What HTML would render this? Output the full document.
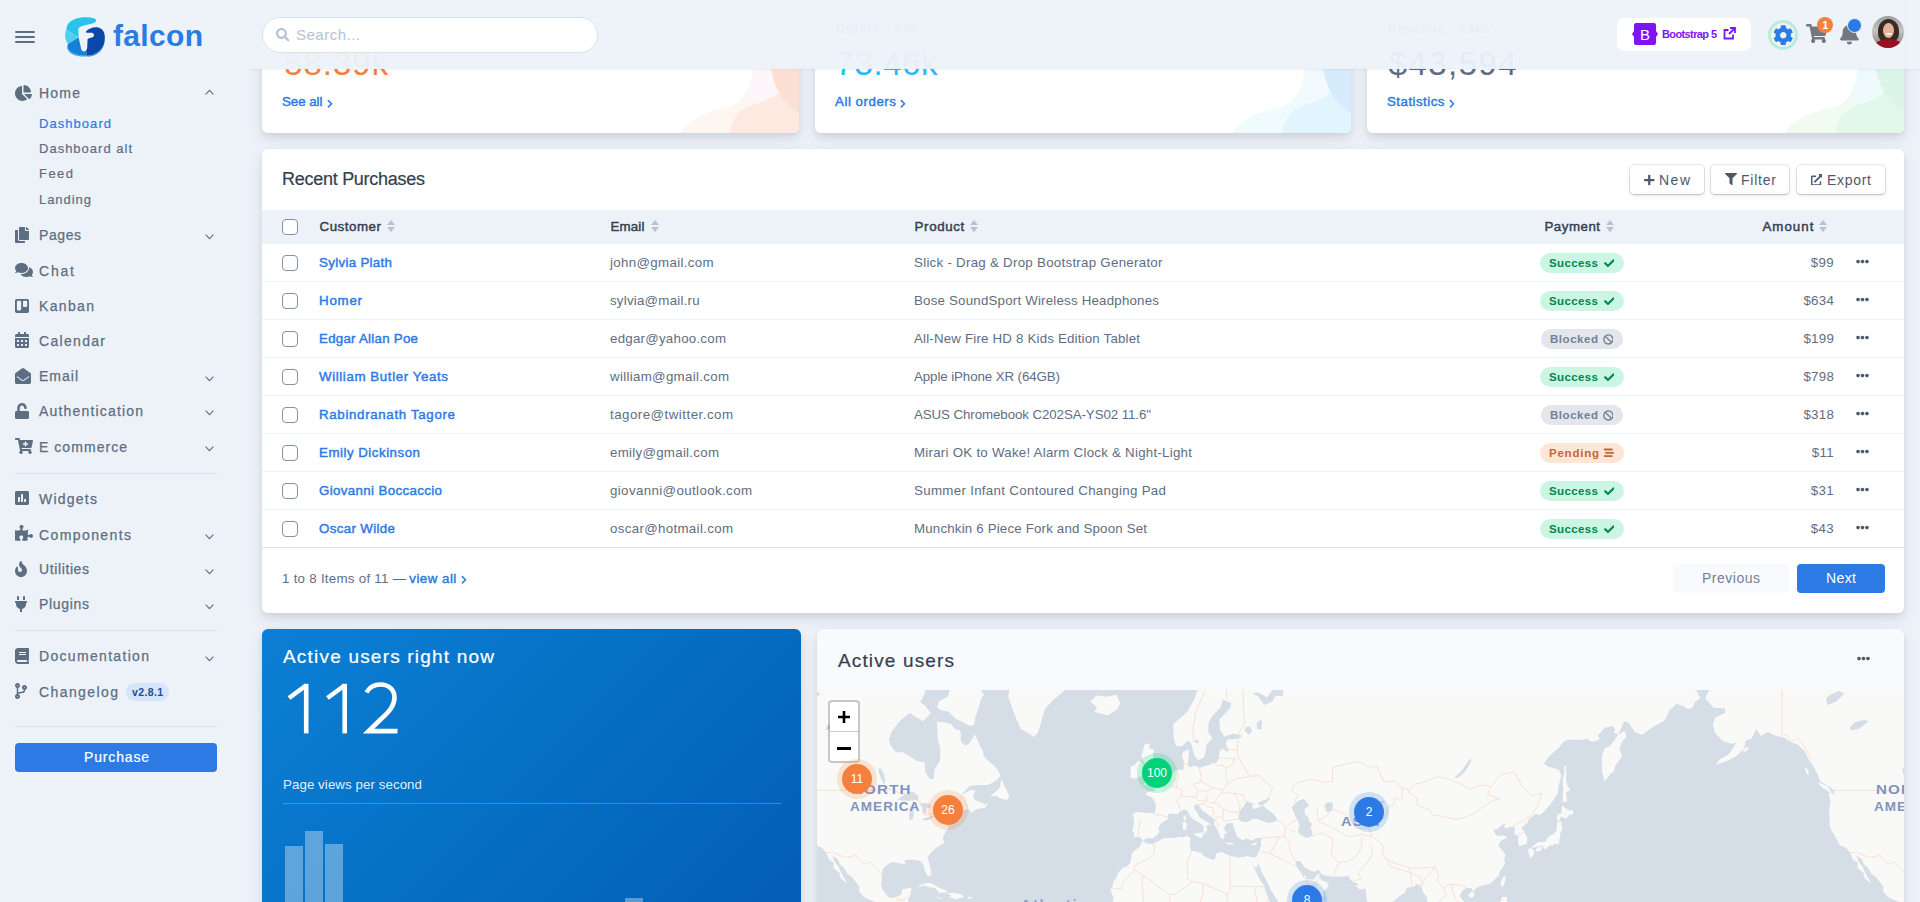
<!DOCTYPE html><html><head><meta charset="utf-8"><title>Falcon</title><style>
*{margin:0;padding:0;box-sizing:border-box}
html,body{width:1920px;height:902px;overflow:hidden;background:#edf2f9;font-family:"Liberation Sans",sans-serif}
.a{position:absolute}
.t{position:absolute;white-space:nowrap;line-height:1}
.card{position:absolute;background:#fff;border-radius:6px;box-shadow:0 7px 14px 0 rgba(65,69,88,.1),0 3px 6px 0 rgba(0,0,0,.07);overflow:hidden}
</style></head><body><div class="card" style="left:262px;top:-20px;width:537px;height:153px"><svg class="a" style="left:407px;top:89px" width="130" height="64" viewBox="0 26 130 64"><path d="M11,90 C20,76 40,68 60,64 C72,61 80,50 84,26 L86,0 L130,0 L130,90Z" fill="#fef6f0"/><path d="M84,26 L86,0 L102,0 L102,26 C105,40 108,50 112,56 C100,60 90,62 76,56 C80,48 83,38 84,26Z" fill="#fdf7fb"/><path d="M61,90 C64,72 74,64 90,60 C105,55 118,45 130,35 L130,90Z" fill="#fde9df"/><path d="M102,0 L102,26 C105,42 112,60 130,70 L130,0Z" fill="#fce0d4"/></svg></div><div class="t" style="left:282.5px;top:23.02px;font-size:12.5px;color:#5e6e82;letter-spacing:0.697px;">Customers</div><div class="t" style="left:364.0px;top:25.14px;font-size:10px;color:#748194;font-weight:700;letter-spacing:0.463px;">-0.23%</div><div class="t" style="left:284.2px;top:47.47px;font-size:33px;color:#f5803e;letter-spacing:0.986px;">58.39k</div><div class="t" style="left:282.0px;top:95.24px;font-size:13.3px;color:#2c7be5;letter-spacing:-0.027px;-webkit-text-stroke:0.45px #2c7be5">See all</div><svg class="a" style="left:326.8px;top:98.7px;" width="5.94" height="9.5" viewBox="0 0 320 512"><path d="M285.476 272.971L91.132 467.314c-9.373 9.373-24.569 9.373-33.941 0l-22.667-22.667c-9.357-9.357-9.375-24.522-.04-33.901L188.505 256 34.484 101.255c-9.335-9.379-9.317-24.544.04-33.901l22.667-22.667c9.373-9.373 24.569-9.373 33.941 0L285.475 239.03c9.373 9.372 9.373 24.568.001 33.941z" fill="#2c7be5"/></svg><div class="card" style="left:815px;top:-20px;width:536px;height:153px"><svg class="a" style="left:406px;top:89px" width="130" height="64" viewBox="0 26 130 64"><path d="M11,90 C20,76 40,68 60,64 C72,61 80,50 84,26 L86,0 L130,0 L130,90Z" fill="#f0fbfe"/><path d="M84,26 L86,0 L102,0 L102,26 C105,40 108,50 112,56 C100,60 90,62 76,56 C80,48 83,38 84,26Z" fill="#f3fafe"/><path d="M61,90 C64,72 74,64 90,60 C105,55 118,45 130,35 L130,90Z" fill="#e0f5fe"/><path d="M102,0 L102,26 C105,42 112,60 130,70 L130,0Z" fill="#d6ebfc"/></svg></div><div class="t" style="left:835.5px;top:23.02px;font-size:12.5px;color:#5e6e82;letter-spacing:1.060px;">Orders</div><div class="t" style="left:894.5px;top:25.14px;font-size:10px;color:#748194;font-weight:700;letter-spacing:0.069px;">0.0%</div><div class="t" style="left:835.5px;top:47.47px;font-size:33px;color:#27bcfd;letter-spacing:0.586px;">73.46k</div><div class="t" style="left:835.0px;top:95.24px;font-size:13.3px;color:#2c7be5;letter-spacing:0.536px;-webkit-text-stroke:0.45px #2c7be5">All orders</div><svg class="a" style="left:900.3px;top:98.7px;" width="5.94" height="9.5" viewBox="0 0 320 512"><path d="M285.476 272.971L91.132 467.314c-9.373 9.373-24.569 9.373-33.941 0l-22.667-22.667c-9.357-9.357-9.375-24.522-.04-33.901L188.505 256 34.484 101.255c-9.335-9.379-9.317-24.544.04-33.901l22.667-22.667c9.373-9.373 24.569-9.373 33.941 0L285.475 239.03c9.373 9.372 9.373 24.568.001 33.941z" fill="#2c7be5"/></svg><div class="card" style="left:1367px;top:-20px;width:537px;height:153px"><svg class="a" style="left:407px;top:89px" width="130" height="64" viewBox="0 26 130 64"><path d="M11,90 C20,76 40,68 60,64 C72,61 80,50 84,26 L86,0 L130,0 L130,90Z" fill="#f2fbf1"/><path d="M84,26 L86,0 L102,0 L102,26 C105,40 108,50 112,56 C100,60 90,62 76,56 C80,48 83,38 84,26Z" fill="#eefafb"/><path d="M61,90 C64,72 74,64 90,60 C105,55 118,45 130,35 L130,90Z" fill="#e2f8eb"/><path d="M102,0 L102,26 C105,42 112,60 130,70 L130,0Z" fill="#dbf6e8"/></svg></div><div class="t" style="left:1387.5px;top:23.02px;font-size:12.5px;color:#5e6e82;letter-spacing:1.094px;">Revenue</div><div class="t" style="left:1459.6px;top:25.14px;font-size:10px;color:#748194;font-weight:700;letter-spacing:0.312px;">9.54%</div><div class="t" style="left:1388.7px;top:47.47px;font-size:33px;color:#5e6e82;letter-spacing:1.454px;">$43,594</div><div class="t" style="left:1387.0px;top:95.24px;font-size:13.3px;color:#2c7be5;letter-spacing:0.476px;-webkit-text-stroke:0.45px #2c7be5">Statistics</div><svg class="a" style="left:1448.8px;top:98.7px;" width="5.94" height="9.5" viewBox="0 0 320 512"><path d="M285.476 272.971L91.132 467.314c-9.373 9.373-24.569 9.373-33.941 0l-22.667-22.667c-9.357-9.357-9.375-24.522-.04-33.901L188.505 256 34.484 101.255c-9.335-9.379-9.317-24.544.04-33.901l22.667-22.667c9.373-9.373 24.569-9.373 33.941 0L285.475 239.03c9.373 9.372 9.373 24.568.001 33.941z" fill="#2c7be5"/></svg><div class="a" style="left:0;top:0;width:1920px;height:69px;background:rgba(237,242,249,.95)"></div><div class="a" style="left:250px;top:69px;width:1670px;height:1px;background:rgba(0,0,0,.04);box-shadow:0 1px 3px rgba(0,0,0,.05)"></div><div class="a" style="left:15px;top:31px;width:20px;height:2px;background:#5e6e82;border-radius:1px"></div><div class="a" style="left:15px;top:36px;width:20px;height:2px;background:#5e6e82;border-radius:1px"></div><div class="a" style="left:15px;top:41px;width:20px;height:2px;background:#5e6e82;border-radius:1px"></div><svg class="a" style="left:65px;top:16.5px;" width="40" height="40" viewBox="0 0 40 40"><path d="M2.1,8.8 C4,4.5 9,1.5 16.2,0.5 C21,0 27,0.6 29.5,1.6 C31.5,2.4 31.8,4.3 29.8,5.5 C27,7 21,7.6 16.5,9.2 C14,10.2 13.2,11.5 13.3,12.5 L13.6,20.5 L1.3,12.5 C1.5,11 1.8,9.8 2.1,8.8Z" fill="#27c3e8"/><path d="M1.3,12.5 L13.6,20.5 L2.9,26.9 C0.8,24 0,21 0.1,18 C0.2,16 0.6,14 1.3,12.5Z" fill="#50d0ef"/><path d="M2.9,26.9 L13.6,20.5 L16.2,32 C16.7,34.5 19.5,35.2 21,33.5 L22,38.8 C18,39 13,38.2 9,36.5 C5,34.8 2,31.5 2.4,29.5 Z" fill="#1680d4"/><path d="M2.4,29.5 C2,31.5 5,34.8 9,36.5 C13,38.2 18,39 22,38.8 L22,39.5 C17,39.8 11,39 7,37 C3.5,35 1.8,32 2.4,29.5Z" fill="#29a6e2"/><path d="M21,14.6 C23,11.8 27,10.4 31,10.3 C35,10.3 38.5,12.5 39.4,16.8 C40.3,21 39.8,25.5 38,29.5 C36,33.5 32,36.5 27,38 C25,38.6 23.5,38.8 22,38.8 L21,33.5 C21.8,32.8 22.1,31.6 22.2,30.5 L22.6,22.1 C24,21.2 25.6,20.8 26.9,20.5 C28.4,20 29.3,18.8 29,17.8 C28.7,16.4 27.5,15.7 26.9,15.7 L22.5,15.8 C21.2,15.8 20.4,15.3 21,14.6Z" fill="#0a47a9"/><path d="M39.6,21 C40.2,28 37,34 31,37.5 C28,39.2 25,39.6 22,39.5 L22,38.8 C26,38.6 31,37 35,33.5 C38,30.5 39.6,26 39.6,21Z" fill="#2a8ae0"/></svg><div class="t" style="left:113.0px;top:20.61px;font-size:30px;color:#2c7be5;font-weight:700;letter-spacing:0.333px;">falcon</div><div class="a" style="left:262px;top:17px;width:336px;height:36px;background:#fff;border:1px solid #d8e2ef;border-radius:18px"></div><svg class="a" style="left:276px;top:28px;" width="13.50" height="13.5" viewBox="0 0 512 512"><path d="M505 442.7L405.3 343c-4.5-4.5-10.6-7-17-7H372c27.6-35.3 44-79.7 44-128C416 93.1 322.9 0 208 0S0 93.1 0 208s93.1 208 208 208c48.3 0 92.7-16.4 128-44v16.3c0 6.4 2.5 12.5 7 17l99.7 99.7c9.4 9.4 24.6 9.4 33.9 0l28.3-28.3c9.4-9.4 9.4-24.6.1-34zM208 336c-70.7 0-128-57.2-128-128 0-70.7 57.2-128 128-128 70.7 0 128 57.2 128 128 0 70.7-57.2 128-128 128z" fill="#b6c1d2"/></svg><div class="t" style="left:296.0px;top:27.10px;font-size:15px;color:#b6c1d2;letter-spacing:0.497px;">Search...</div><div class="a" style="left:1617px;top:18px;width:134px;height:33px;background:#fff;border-radius:7px"></div><svg class="a" style="left:1632px;top:23px;" width="26" height="22" viewBox="0 0 26 22"><path d="M4 0 H22 C23.5 0 24 1 24 2.5 V8 L26 11 L24 14 V19.5 C24 21 23.5 22 22 22 H4 C2.5 22 2 21 2 19.5 V14 L0 11 L2 8 V2.5 C2 1 2.5 0 4 0Z" fill="#7e14f5"/><text x="13" y="17" text-anchor="middle" font-family="Liberation Sans" font-size="15" fill="#fff">B</text></svg><div class="t" style="left:1662.0px;top:29.19px;font-size:11px;color:#7e14f5;font-weight:700;letter-spacing:-0.611px;">Bootstrap 5</div><svg class="a" style="left:1723px;top:27px;" width="13" height="13" viewBox="0 0 13 13"><path d="M10 7.5 V11.5 H1.5 V3 H5.5" stroke="#7e14f5" stroke-width="1.8" fill="none"/><path d="M7 1 H12 V6 M12 1 L6 7" stroke="#7e14f5" stroke-width="1.8" fill="none"/></svg><div class="a" style="left:1768px;top:20px;width:30px;height:30px;border-radius:50%;border:3px solid #b7ecd5"></div><svg class="a" style="left:1773px;top:24.5px;" width="20.50" height="20.5" viewBox="0 0 512 512"><path d="M487.4 315.7l-42.6-24.6c4.3-23.2 4.3-47 0-70.2l42.6-24.6c4.9-2.8 7.1-8.6 5.5-14-11.1-35.6-30-67.8-54.7-94.6-3.8-4.1-10-5.1-14.8-2.3L380.8 110c-17.9-15.4-38.5-27.3-60.8-35.1V25.8c0-5.6-3.9-10.5-9.4-11.7-36.7-8.2-74.3-7.8-109.2 0-5.5 1.2-9.4 6.1-9.4 11.7V75c-22.2 7.9-42.8 19.8-60.8 35.1L88.7 85.5c-4.9-2.8-11-1.9-14.8 2.3-24.7 26.7-43.6 58.9-54.7 94.6-1.7 5.4.6 11.2 5.5 14L67.3 221c-4.3 23.2-4.3 47 0 70.2l-42.6 24.6c-4.9 2.8-7.1 8.6-5.5 14 11.1 35.6 30 67.8 54.7 94.6 3.8 4.1 10 5.1 14.8 2.3l42.6-24.6c17.9 15.4 38.5 27.3 60.8 35.1v49.2c0 5.6 3.9 10.5 9.4 11.7 36.7 8.2 74.3 7.8 109.2 0 5.5-1.2 9.4-6.1 9.4-11.7v-49.2c22.2-7.9 42.8-19.8 60.8-35.1l42.6 24.6c4.9 2.8 11 1.9 14.8-2.3 24.7-26.7 43.6-58.9 54.7-94.6 1.5-5.5-.7-11.3-5.6-14.1zM256 336c-44.1 0-80-35.9-80-80s35.9-80 80-80 80 35.9 80 80-35.9 80-80 80z" fill="#2c7be5"/></svg><svg class="a" style="left:1806px;top:24px;" width="21.38" height="19" viewBox="0 0 576 512"><path d="M528.12 301.319l47.273-208C578.806 78.301 567.391 64 551.99 64H159.208l-9.166-44.81C147.758 8.021 137.93 0 126.529 0H24C10.745 0 0 10.745 0 24v16c0 13.255 10.745 24 24 24h69.883l70.248 343.435C147.325 417.1 136 435.222 136 456c0 30.928 25.072 56 56 56s56-25.072 56-56c0-15.674-6.447-29.835-16.824-40h209.647C430.447 426.165 424 440.326 424 456c0 30.928 25.072 56 56 56s56-25.072 56-56c0-22.172-12.888-41.332-31.579-50.405l5.517-24.276c3.413-15.018-8.002-29.319-23.403-29.319H218.117l-6.545-32h293.145c11.206 0 20.92-7.754 23.403-18.681z" fill="#737880"/></svg><div class="a" style="left:1817px;top:17px;width:16px;height:16px;border-radius:50%;background:#f5803e"></div><div class="t" style="left:1822.3px;top:19.89px;font-size:11px;color:#fff;font-weight:700;">1</div><svg class="a" style="left:1840px;top:23px;" width="18.81" height="21.5" viewBox="0 0 448 512"><path d="M224 512c35.32 0 63.97-28.65 63.970-64H160.03c0 35.35 28.65 64 63.97 64zm215.39-149.71c-19.32-20.76-55.47-51.99-55.47-154.29 0-77.7-54.48-139.9-127.94-155.16V32c0-17.67-14.32-32-31.98-32s-31.98 14.33-31.98 32v20.84C118.56 68.1 64.08 130.3 64.08 208c0 102.3-36.15 133.53-55.47 154.29-6 6.45-8.66 14.16-8.610 21.71.11 16.4 12.98 32 32.1 32h383.8c19.12 0 32-15.6 32.1-32 .05-7.55-2.61-15.27-8.61-21.71z" fill="#737880"/></svg><div class="a" style="left:1846.5px;top:17.5px;width:15px;height:15px;border-radius:50%;background:#2c7be5;border:1.5px solid #edf2f9"></div><div class="a" style="left:1872px;top:16px;width:32px;height:32px;border-radius:50%;overflow:hidden;background:linear-gradient(180deg,#9aa0a6 0%,#c8c3bf 45%,#7d7a78 100%)"><div class="a" style="left:6px;top:3px;width:21px;height:24px;border-radius:50% 50% 40% 40%;background:#3b2a24"></div><div class="a" style="left:11px;top:7px;width:11px;height:15px;border-radius:50%;background:#e2b49c"></div><div class="a" style="left:13.5px;top:16.5px;width:6px;height:2.5px;border-radius:0 0 3px 3px;background:#f7f1ef"></div><div class="a" style="left:3px;top:23px;width:27px;height:14px;border-radius:50% 50% 0 0;background:#9b0f22"></div></div><svg class="a" style="left:15px;top:84.6px;" width="17.00" height="16" viewBox="0 0 544 512"><path d="M527.79 288H290.5l158.03 158.03c6.04 6.04 15.98 6.53 22.19.68 38.7-36.46 65.32-85.61 73.13-140.86 1.34-9.46-6.51-17.85-16.06-17.85zm-15.83-64.8C503.72 103.74 408.26 8.28 288.8.04 279.68-.59 272 7.1 272 16.24V240h223.77c9.14 0 16.82-7.68 16.19-16.8zM224 288V50.71c0-9.55-8.39-17.4-17.84-16.06C86.99 51.49-4.1 155.6.14 280.37 4.5 408.51 114.83 513.59 243.03 511.98c50.4-.63 96.97-16.87 135.26-44.03 7.9-5.6 8.42-17.23 1.57-24.08L224 288z" fill="#5e6e82"/></svg><div class="t" style="left:39.0px;top:85.85px;font-size:14px;color:#5e6e82;letter-spacing:1.219px;-webkit-text-stroke:0.25px #5e6e82">Home</div><svg class="a" style="left:205px;top:89px;" width="9" height="6" viewBox="0 0 9 6"><path d="M0.6 5.4 L4.5 1.4 L8.4 5.4" stroke="#5e6e82" stroke-width="1.1" fill="none"/></svg><svg class="a" style="left:15px;top:227.3px;" width="14.00" height="16" viewBox="0 0 448 512"><path d="M320 448v40c0 13.255-10.745 24-24 24H24c-13.255 0-24-10.745-24-24V120c0-13.255 10.745-24 24-24h72v296c0 30.879 25.121 56 56 56h168zm0-344V0H152c-13.255 0-24 10.745-24 24v368c0 13.255 10.745 24 24 24h272c13.255 0 24-10.745 24-24V128H344c-13.2 0-24-10.8-24-24zm120.971-31.029L375.029 7.029A24 24 0 0 0 358.059 0H352v96h96v-6.059a24 24 0 0 0-7.029-16.97z" fill="#5e6e82"/></svg><div class="t" style="left:39.0px;top:227.85px;font-size:14px;color:#5e6e82;letter-spacing:0.576px;-webkit-text-stroke:0.25px #5e6e82">Pages</div><svg class="a" style="left:205px;top:234.3px;" width="9" height="6" viewBox="0 0 9 6"><path d="M0.6 0.6 L4.5 4.6 L8.4 0.6" stroke="#5e6e82" stroke-width="1.1" fill="none"/></svg><svg class="a" style="left:15px;top:262.3px;" width="18.00" height="16" viewBox="0 0 576 512"><path d="M416 192c0-88.4-93.1-160-208-160S0 103.6 0 192c0 34.3 14.1 65.9 38 92-13.4 30.2-35.5 54.2-35.8 54.5-2.2 2.3-2.8 5.7-1.5 8.7S4.8 352 8 352c36.6 0 66.9-12.3 88.7-25 32.2 15.7 70.3 25 111.3 25 114.9 0 208-71.6 208-160zm122 220c23.9-26 38-57.7 38-92 0-66.9-53.5-124.2-129.3-148.1.9 6.6 1.3 13.3 1.3 20.1 0 105.9-107.7 192-240 192-10.8 0-21.3-.8-31.7-1.9C207.8 439.6 281.8 480 368 480c41 0 79.1-9.2 111.3-25 21.8 12.7 52.1 25 88.7 25 3.2 0 6.1-1.9 7.3-4.8 1.3-2.9.7-6.3-1.5-8.7-.3-.3-22.4-24.2-35.8-54.5z" fill="#5e6e82"/></svg><div class="t" style="left:39.0px;top:263.85px;font-size:14px;color:#5e6e82;letter-spacing:1.810px;-webkit-text-stroke:0.25px #5e6e82">Chat</div><svg class="a" style="left:15px;top:298.3px;" width="14.00" height="16" viewBox="0 0 448 512"><path d="M392.3 32H56.1C25.1 32 0 57.1 0 88c-.1 0 0-4 0 336 0 30.9 25.1 56 56 56h336.2c30.8-.2 55.7-25.2 55.7-56V88c.1-30.8-24.8-55.8-55.6-56zM197 371.3c-.2 14.7-12.1 26.6-26.9 26.6H87.4c-14.8.1-26.9-11.8-27-26.6V117.1c0-14.8 12-26.9 26.9-26.9h82.9c14.8 0 26.9 12 26.9 26.9v254.2zm193.1-112c0 14.8-12 26.9-26.9 26.9h-81c-14.8 0-26.9-12-26.9-26.9V117.2c0-14.8 12-26.9 26.8-26.9h81.1c14.8 0 26.9 12 26.9 26.9v142.1z" fill="#5e6e82"/></svg><div class="t" style="left:39.0px;top:298.95px;font-size:14px;color:#5e6e82;letter-spacing:1.347px;-webkit-text-stroke:0.25px #5e6e82">Kanban</div><svg class="a" style="left:15px;top:331.9px;" width="14.00" height="16" viewBox="0 0 448 512"><path d="M0 464c0 26.5 21.5 48 48 48h352c26.5 0 48-21.5 48-48V192H0v272zm320-196c0-6.6 5.4-12 12-12h40c6.6 0 12 5.4 12 12v40c0 6.6-5.4 12-12 12h-40c-6.6 0-12-5.4-12-12v-40zm0 128c0-6.6 5.4-12 12-12h40c6.6 0 12 5.4 12 12v40c0 6.6-5.4 12-12 12h-40c-6.6 0-12-5.4-12-12v-40zM192 268c0-6.6 5.4-12 12-12h40c6.6 0 12 5.4 12 12v40c0 6.6-5.4 12-12 12h-40c-6.6 0-12-5.4-12-12v-40zm0 128c0-6.6 5.4-12 12-12h40c6.6 0 12 5.4 12 12v40c0 6.6-5.4 12-12 12h-40c-6.6 0-12-5.4-12-12v-40zM64 268c0-6.6 5.4-12 12-12h40c6.6 0 12 5.4 12 12v40c0 6.6-5.4 12-12 12H76c-6.6 0-12-5.4-12-12v-40zm0 128c0-6.6 5.4-12 12-12h40c6.6 0 12 5.4 12 12v40c0 6.6-5.4 12-12 12H76c-6.6 0-12-5.4-12-12v-40zM400 64h-48V16c0-8.8-7.2-16-16-16h-32c-8.8 0-16 7.2-16 16v48H160V16c0-8.8-7.2-16-16-16h-32c-8.8 0-16 7.2-16 16v48H48C21.5 64 0 85.5 0 112v48h448v-48c0-26.5-21.5-48-48-48z" fill="#5e6e82"/></svg><div class="t" style="left:39.0px;top:333.85px;font-size:14px;color:#5e6e82;letter-spacing:1.313px;-webkit-text-stroke:0.25px #5e6e82">Calendar</div><svg class="a" style="left:15px;top:367.9px;" width="16.00" height="16" viewBox="0 0 512 512"><path d="M512 464c0 26.51-21.49 48-48 48H48c-26.51 0-48-21.49-48-48V200.724a48 48 0 0 1 18.387-37.776c24.913-19.529 45.501-35.365 164.2-121.511C199.412 29.17 232.797-.347 256 .003c23.198-.354 56.596 29.172 73.413 41.433 118.687 86.137 139.303 101.995 164.2 121.512A48 48 0 0 1 512 200.724V464zm-65.666-196.605c-2.563-3.728-7.7-4.595-11.339-1.907-22.845 16.873-55.462 40.705-105.582 77.079-16.825 12.266-50.21 41.781-73.413 41.43-23.211.344-56.559-29.143-73.413-41.43-50.114-36.37-82.734-60.204-105.582-77.079-3.639-2.688-8.776-1.821-11.339 1.907l-9.072 13.196a7.998 7.998 0 0 0 1.839 10.967c22.887 16.899 55.454 40.69 105.303 76.868 20.274 14.781 56.524 47.813 92.264 47.573 35.724.242 71.961-32.771 92.263-47.573 49.85-36.179 82.418-59.97 105.303-76.868a7.998 7.998 0 0 0 1.839-10.967l-9.071-13.196z" fill="#5e6e82"/></svg><div class="t" style="left:39.0px;top:369.05px;font-size:14px;color:#5e6e82;letter-spacing:0.998px;-webkit-text-stroke:0.25px #5e6e82">Email</div><svg class="a" style="left:205px;top:375.5px;" width="9" height="6" viewBox="0 0 9 6"><path d="M0.6 0.6 L4.5 4.6 L8.4 0.6" stroke="#5e6e82" stroke-width="1.1" fill="none"/></svg><svg class="a" style="left:15px;top:403px;" width="14.00" height="16" viewBox="0 0 448 512"><path d="M400 256H152V152.9c0-39.6 31.7-72.5 71.3-72.9 40-.4 72.7 32.1 72.7 72v16c0 13.3 10.7 24 24 24h32c13.3 0 24-10.7 24-24v-16C376 68 307.5-.3 223.5 0 139.5.3 72 69.5 72 153.5V256H48c-26.5 0-48 21.5-48 48v160c0 26.5 21.5 48 48 48h352c26.5 0 48-21.5 48-48V304c0-26.5-21.5-48-48-48z" fill="#5e6e82"/></svg><div class="t" style="left:39.0px;top:403.55px;font-size:14px;color:#5e6e82;letter-spacing:1.175px;-webkit-text-stroke:0.25px #5e6e82">Authentication</div><svg class="a" style="left:205px;top:410px;" width="9" height="6" viewBox="0 0 9 6"><path d="M0.6 0.6 L4.5 4.6 L8.4 0.6" stroke="#5e6e82" stroke-width="1.1" fill="none"/></svg><svg class="a" style="left:15px;top:437.7px;" width="18.00" height="16" viewBox="0 0 576 512"><path d="M504.717 320H211.572l6.545 32h268.418c15.401 0 26.816 14.301 23.403 29.319l-5.517 24.276C523.112 414.668 536 433.828 536 456c0 31.202-25.519 56.444-56.824 55.994-29.823-.429-54.35-24.631-55.155-54.447-.44-16.287 6.085-31.049 16.803-41.548H231.176C241.553 426.165 248 440.326 248 456c0 31.813-26.528 57.431-58.67 55.938-28.54-1.325-51.751-24.385-53.251-52.917-1.158-22.034 10.436-41.455 28.051-51.586L93.883 64H24C10.745 64 0 53.255 0 40V24C0 10.745 10.745 0 24 0h102.529c11.401 0 21.228 8.021 23.513 19.19L159.208 64H551.99c15.401 0 26.816 14.301 23.403 29.319l-47.273 208C525.637 312.246 515.923 320 504.717 320zM408 168h-48v-40c0-8.837-7.163-16-16-16h-16c-8.837 0-16 7.163-16 16v40h-48c-8.837 0-16 7.163-16 16v16c0 8.837 7.163 16 16 16h48v40c0 8.837 7.163 16 16 16h16c8.837 0 16-7.163 16-16v-40h48c8.837 0 16-7.163 16-16v-16c0-8.837-7.163-16-16-16z" fill="#5e6e82"/></svg><div class="t" style="left:39.0px;top:439.55px;font-size:14px;color:#5e6e82;letter-spacing:1.048px;-webkit-text-stroke:0.25px #5e6e82">E commerce</div><svg class="a" style="left:205px;top:446px;" width="9" height="6" viewBox="0 0 9 6"><path d="M0.6 0.6 L4.5 4.6 L8.4 0.6" stroke="#5e6e82" stroke-width="1.1" fill="none"/></svg><svg class="a" style="left:15px;top:489.6px;" width="14.00" height="16" viewBox="0 0 448 512"><path d="M400 32H48C21.5 32 0 53.5 0 80v352c0 26.5 21.5 48 48 48h352c26.5 0 48-21.5 48-48V80c0-26.5-21.5-48-48-48zM160 368c0 8.84-7.16 16-16 16h-32c-8.84 0-16-7.16-16-16V240c0-8.84 7.160-16 16-16h32c8.84 0 16 7.16 16 16v128zm96 0c0 8.84-7.16 16-16 16h-32c-8.84 0-16-7.16-16-16V144c0-8.84 7.16-16 16-16h32c8.84 0 16 7.16 16 16v224zm96 0c0 8.84-7.16 16-16 16h-32c-8.84 0-16-7.16-16-16v-64c0-8.84 7.16-16 16-16h32c8.84 0 16 7.16 16 16v64z" fill="#5e6e82"/></svg><div class="t" style="left:39.0px;top:491.95px;font-size:14px;color:#5e6e82;letter-spacing:1.238px;-webkit-text-stroke:0.25px #5e6e82">Widgets</div><svg class="a" style="left:15px;top:525px;" width="18.00" height="16" viewBox="0 0 576 512"><path d="M519.442 288.651c-41.519 0-59.5 31.593-82.058 31.593C377.409 320.244 432 144 432 144s-196.288 80-196.288-3.297c0-35.827 36.288-46.25 36.288-85.985C272 19.216 243.885 0 210.539 0c-34.654 0-66.366 18.891-66.366 56.346 0 41.364 31.711 59.277 31.711 81.75C175.885 207.719 0 166.758 0 166.758v333.237s178.635 41.047 178.635-28.662c0-22.473-40-40.107-40-81.471 0-37.456 29.25-56.346 63.577-56.346 33.673 0 61.788 19.216 61.788 54.717 0 39.735-36.288 50.158-36.288 85.985 0 60.803 129.675 25.73 181.23 25.73 0 0-34.725-120.101 25.827-120.101 35.962 0 46.423 36.152 86.308 36.152C556.712 416 576 387.99 576 354.443c0-34.199-18.962-65.792-56.558-65.792z" fill="#5e6e82"/></svg><div class="t" style="left:39.0px;top:527.55px;font-size:14px;color:#5e6e82;letter-spacing:1.403px;-webkit-text-stroke:0.25px #5e6e82">Components</div><svg class="a" style="left:205px;top:534px;" width="9" height="6" viewBox="0 0 9 6"><path d="M0.6 0.6 L4.5 4.6 L8.4 0.6" stroke="#5e6e82" stroke-width="1.1" fill="none"/></svg><svg class="a" style="left:15px;top:561.2px;" width="12.00" height="16" viewBox="0 0 384 512"><path d="M216 23.86c0-23.8-30.65-32.77-44.15-13.04C48 191.85 224 200 224 288c0 35.63-29.11 64.46-64.85 63.99-35.17-.45-63.15-29.77-63.15-64.94v-85.51c0-21.7-26.47-32.23-41.43-16.5C27.8 213.16 0 261.33 0 320c0 105.87 86.13 192 192 192s192-86.13 192-192c0-170.29-168-193-168-296.14z" fill="#5e6e82"/></svg><div class="t" style="left:39.0px;top:562.25px;font-size:14px;color:#5e6e82;letter-spacing:0.610px;-webkit-text-stroke:0.25px #5e6e82">Utilities</div><svg class="a" style="left:205px;top:568.7px;" width="9" height="6" viewBox="0 0 9 6"><path d="M0.6 0.6 L4.5 4.6 L8.4 0.6" stroke="#5e6e82" stroke-width="1.1" fill="none"/></svg><svg class="a" style="left:15px;top:596px;" width="12.00" height="16" viewBox="0 0 384 512"><path d="M320,32a32,32,0,0,0-64,0v96h64Zm48,128H16A16,16,0,0,0,0,176v32a16,16,0,0,0,16,16H32v32A160.07,160.07,0,0,0,160,412.8V512h64V412.8A160.07,160.07,0,0,0,352,256V224h16a16,16,0,0,0,16-16V176A16,16,0,0,0,368,160ZM128,32a32,32,0,0,0-64,0v96h64Z" fill="#5e6e82"/></svg><div class="t" style="left:39.0px;top:597.05px;font-size:14px;color:#5e6e82;letter-spacing:0.681px;-webkit-text-stroke:0.25px #5e6e82">Plugins</div><svg class="a" style="left:205px;top:603.5px;" width="9" height="6" viewBox="0 0 9 6"><path d="M0.6 0.6 L4.5 4.6 L8.4 0.6" stroke="#5e6e82" stroke-width="1.1" fill="none"/></svg><svg class="a" style="left:15px;top:647.5px;" width="14.00" height="16" viewBox="0 0 448 512"><path d="M448 360V24c0-13.3-10.7-24-24-24H96C43 0 0 43 0 96v320c0 53 43 96 96 96h328c13.3 0 24-10.7 24-24v-16c0-7.5-3.5-14.3-8.9-18.7-4.2-15.4-4.2-59.3 0-74.7 5.4-4.3 8.9-11.1 8.9-18.6zM128 134c0-3.3 2.7-6 6-6h212c3.3 0 6 2.7 6 6v20c0 3.3-2.7 6-6 6H134c-3.3 0-6-2.7-6-6v-20zm0 64c0-3.3 2.7-6 6-6h212c3.3 0 6 2.7 6 6v20c0 3.3-2.7 6-6 6H134c-3.3 0-6-2.7-6-6v-20zm253.4 250H96c-17.7 0-32-14.3-32-32 0-17.6 14.4-32 32-32h285.4c-1.9 17.1-1.9 46.9 0 64z" fill="#5e6e82"/></svg><div class="t" style="left:39.0px;top:649.25px;font-size:14px;color:#5e6e82;letter-spacing:1.320px;-webkit-text-stroke:0.25px #5e6e82">Documentation</div><svg class="a" style="left:205px;top:655.7px;" width="9" height="6" viewBox="0 0 9 6"><path d="M0.6 0.6 L4.5 4.6 L8.4 0.6" stroke="#5e6e82" stroke-width="1.1" fill="none"/></svg><svg class="a" style="left:15px;top:683px;" width="12.00" height="16" viewBox="0 0 384 512"><path d="M384 144c0-44.2-35.8-80-80-80s-80 35.8-80 80c0 36.4 24.3 67.1 57.5 76.8-.6 16.1-4.2 28.5-11 36.9-15.4 19.2-49.3 22.4-85.2 25.7-28.2 2.6-57.4 5.4-81.3 16.9v-144c32.5-10.2 56-40.5 56-76.3 0-44.2-35.8-80-80-80S0 35.8 0 80c0 35.8 23.5 66.1 56 76.3v199.3C23.5 365.9 0 396.2 0 432c0 44.2 35.8 80 80 80s80-35.8 80-80c0-34-21.2-63.1-51.2-74.6 3.1-5.2 7.8-9.8 14.9-13.4 16.2-8.2 40.4-10.4 66.1-12.8 42.2-3.9 90-8.4 118.2-43.4 14-17.4 21.1-39.8 21.6-67.9 31.6-10.8 54.4-40.7 54.4-75.9zM80 64c8.8 0 16 7.2 16 16s-7.2 16-16 16-16-7.2-16-16 7.2-16 16-16zm0 384c-8.8 0-16-7.2-16-16s7.2-16 16-16 16 7.2 16 16-7.2 16-16 16zm224-320c8.8 0 16 7.2 16 16s-7.2 16-16 16-16-7.2-16-16 7.2-16 16-16z" fill="#5e6e82"/></svg><div class="t" style="left:39.0px;top:685.05px;font-size:14px;color:#5e6e82;letter-spacing:1.410px;-webkit-text-stroke:0.25px #5e6e82">Changelog</div><div class="t" style="left:39.0px;top:117.00px;font-size:13px;color:#2c7be5;letter-spacing:1.051px;-webkit-text-stroke:0.2px #2c7be5">Dashboard</div><div class="t" style="left:39.0px;top:142.40px;font-size:13px;color:#5e6e82;letter-spacing:1.006px;-webkit-text-stroke:0.2px #5e6e82">Dashboard alt</div><div class="t" style="left:39.0px;top:167.30px;font-size:13px;color:#5e6e82;letter-spacing:1.457px;-webkit-text-stroke:0.2px #5e6e82">Feed</div><div class="t" style="left:39.0px;top:192.90px;font-size:13px;color:#5e6e82;letter-spacing:0.956px;-webkit-text-stroke:0.2px #5e6e82">Landing</div><div class="a" style="left:15px;top:473px;width:202px;height:1px;background:#d5dfed"></div><div class="a" style="left:15px;top:630px;width:202px;height:1px;background:#d5dfed"></div><div class="a" style="left:15px;top:726px;width:202px;height:1px;background:#d5dfed"></div><div class="a" style="left:126px;top:683px;width:43px;height:18px;background:#d5e5fa;border-radius:9px"></div><div class="t" style="left:132.0px;top:686.61px;font-size:10.5px;color:#1c4f93;font-weight:700;letter-spacing:0.362px;">v2.8.1</div><div class="a" style="left:15px;top:743px;width:202px;height:29px;background:#2c7be5;border-radius:4px"></div><div class="t" style="left:84.0px;top:750.15px;font-size:14px;color:#fff;letter-spacing:0.837px;-webkit-text-stroke:0.2px #fff">Purchase</div><div class="card" style="left:262px;top:149px;width:1642px;height:464px"></div><div class="t" style="left:282.0px;top:170.26px;font-size:18px;color:#344050;letter-spacing:-0.271px;-webkit-text-stroke:0.2px #344050">Recent Purchases</div><div class="a" style="left:1630px;top:165px;width:74px;height:29px;background:#fff;border-radius:4px;box-shadow:0 0 0 1px rgba(43,45,80,.1),0 2px 5px 0 rgba(43,45,80,.08),0 1px 1.5px 0 rgba(0,0,0,.07),0 1px 2px 0 rgba(0,0,0,.08)"></div><div class="a" style="left:1711px;top:165px;width:78px;height:29px;background:#fff;border-radius:4px;box-shadow:0 0 0 1px rgba(43,45,80,.1),0 2px 5px 0 rgba(43,45,80,.08),0 1px 1.5px 0 rgba(0,0,0,.07),0 1px 2px 0 rgba(0,0,0,.08)"></div><div class="a" style="left:1797px;top:165px;width:88px;height:29px;background:#fff;border-radius:4px;box-shadow:0 0 0 1px rgba(43,45,80,.1),0 2px 5px 0 rgba(43,45,80,.08),0 1px 1.5px 0 rgba(0,0,0,.07),0 1px 2px 0 rgba(0,0,0,.08)"></div><svg class="a" style="left:1644.1px;top:173.6px;" width="10.50" height="12" viewBox="0 0 448 512"><path d="M416 208H272V64c0-17.67-14.33-32-32-32h-32c-17.67 0-32 14.33-32 32v144H32c-17.67 0-32 14.33-32 32v32c0 17.67 14.33 32 32 32h144v144c0 17.67 14.33 32 32 32h32c17.67 0 32-14.33 32-32V304h144c17.67 0 32-14.33 32-32v-32c0-17.67-14.33-32-32-32z" fill="#4d5969"/></svg><div class="t" style="left:1659.0px;top:172.65px;font-size:14px;color:#4d5969;letter-spacing:1.497px;">New</div><svg class="a" style="left:1725.2px;top:173.3px;" width="12.00" height="12" viewBox="0 0 512 512"><path d="M487.976 0H24.028C2.71 0-8.047 25.866 7.058 40.971L192 225.941V432c0 7.831 3.821 15.17 10.237 19.662l80 55.98C298.02 518.69 320 507.493 320 487.98V225.941l184.947-184.97C520.021 25.896 509.338 0 487.976 0z" fill="#4d5969"/></svg><div class="t" style="left:1741.0px;top:172.65px;font-size:14px;color:#4d5969;letter-spacing:0.778px;">Filter</div><svg class="a" style="left:1810.6px;top:173.8px;" width="11.70" height="11.7" viewBox="0 0 512 512"><path d="M432,320H400a16,16,0,0,0-16,16V448H64V128H208a16,16,0,0,0,16-16V80a16,16,0,0,0-16-16H48A48,48,0,0,0,0,112V464a48,48,0,0,0,48,48H400a48,48,0,0,0,48-48V336A16,16,0,0,0,432,320ZM488,0h-128c-21.37,0-32.05,25.91-17,41l35.73,35.73L135,320.37a24,24,0,0,0,0,34L157.67,377a24,24,0,0,0,34,0L435.28,133.32,471,169c15,15,41,4.5,41-17V24A24,24,0,0,0,488,0Z" fill="#4d5969"/></svg><div class="t" style="left:1827.0px;top:172.65px;font-size:14px;color:#4d5969;letter-spacing:0.708px;">Export</div><div class="a" style="left:262px;top:210px;width:1642px;height:34px;background:#edf2f9"></div><div class="a" style="left:282px;top:219px;width:16px;height:16px;background:#fff;border:1px solid #8392a8;border-radius:4px"></div><div class="t" style="left:319.5px;top:219.74px;font-size:13.3px;color:#344050;letter-spacing:0.551px;-webkit-text-stroke:0.45px #344050">Customer</div><svg class="a" style="left:387px;top:220px;" width="8" height="12" viewBox="0 0 8 12"><path d="M4 0 L8 5 H0Z M0 7 H8 L4 12Z" fill="#b6c1d2"/></svg><div class="t" style="left:610.4px;top:219.74px;font-size:13.3px;color:#344050;letter-spacing:0.186px;-webkit-text-stroke:0.45px #344050">Email</div><svg class="a" style="left:651px;top:220px;" width="8" height="12" viewBox="0 0 8 12"><path d="M4 0 L8 5 H0Z M0 7 H8 L4 12Z" fill="#b6c1d2"/></svg><div class="t" style="left:914.6px;top:219.74px;font-size:13.3px;color:#344050;letter-spacing:0.628px;-webkit-text-stroke:0.45px #344050">Product</div><svg class="a" style="left:970px;top:220px;" width="8" height="12" viewBox="0 0 8 12"><path d="M4 0 L8 5 H0Z M0 7 H8 L4 12Z" fill="#b6c1d2"/></svg><div class="t" style="left:1544.5px;top:219.74px;font-size:13.3px;color:#344050;letter-spacing:0.503px;-webkit-text-stroke:0.45px #344050">Payment</div><svg class="a" style="left:1606px;top:220px;" width="8" height="12" viewBox="0 0 8 12"><path d="M4 0 L8 5 H0Z M0 7 H8 L4 12Z" fill="#b6c1d2"/></svg><div class="t" style="left:1762.4px;top:219.74px;font-size:13.3px;color:#344050;letter-spacing:1.033px;-webkit-text-stroke:0.45px #344050">Amount</div><svg class="a" style="left:1819px;top:220px;" width="8" height="12" viewBox="0 0 8 12"><path d="M4 0 L8 5 H0Z M0 7 H8 L4 12Z" fill="#b6c1d2"/></svg><div class="a" style="left:262px;top:281px;width:1642px;height:1px;background:#edf2f9"></div><div class="a" style="left:282px;top:254.5px;width:16px;height:16px;background:#fff;border:1px solid #8392a8;border-radius:4px"></div><div class="t" style="left:319.0px;top:256.04px;font-size:13.3px;color:#2c7be5;letter-spacing:0.319px;-webkit-text-stroke:0.45px #2c7be5">Sylvia Plath</div><div class="t" style="left:610.0px;top:256.04px;font-size:13.3px;color:#5e6e82;letter-spacing:0.335px;">john@gmail.com</div><div class="t" style="left:914.0px;top:256.04px;font-size:13.3px;color:#5e6e82;letter-spacing:0.276px;">Slick - Drag &amp; Drop Bootstrap Generator</div><div class="t" style="left:1810.8px;top:256.04px;font-size:13.3px;color:#5e6e82;letter-spacing:0.3px">$99</div><svg class="a" style="left:1856px;top:254.8px;" width="13.00" height="13" viewBox="0 0 512 512"><path d="M328 256c0 39.8-32.2 72-72 72s-72-32.2-72-72 32.2-72 72-72 72 32.2 72 72zm104-72c-39.8 0-72 32.2-72 72s32.2 72 72 72 72-32.2 72-72-32.2-72-72-72zm-352 0c-39.8 0-72 32.2-72 72s32.2 72 72 72 72-32.2 72-72-32.2-72-72-72z" fill="#4d5969"/></svg><div class="a" style="left:1540px;top:253px;width:84px;height:20px;background:#ccf6e4;border-radius:10px"></div><div class="t" style="left:1549.0px;top:257.57px;font-size:11.5px;color:#00864e;font-weight:700;letter-spacing:0.388px;">Success</div><svg class="a" style="left:1603.8px;top:257.5px;" width="10.60" height="10.6" viewBox="0 0 512 512"><path d="M173.898 439.404l-166.4-166.4c-9.997-9.997-9.997-26.206 0-36.204l36.203-36.204c9.997-9.998 26.207-9.998 36.204 0L192 312.69 432.095 72.596c9.997-9.997 26.207-9.997 36.204 0l36.203 36.204c9.997 9.997 9.997 26.206 0 36.204l-294.4 294.401c-9.998 9.997-26.207 9.997-36.204-.001z" fill="#00864e"/></svg><div class="a" style="left:262px;top:319px;width:1642px;height:1px;background:#edf2f9"></div><div class="a" style="left:282px;top:292.5px;width:16px;height:16px;background:#fff;border:1px solid #8392a8;border-radius:4px"></div><div class="t" style="left:319.0px;top:294.04px;font-size:13.3px;color:#2c7be5;letter-spacing:0.774px;-webkit-text-stroke:0.45px #2c7be5">Homer</div><div class="t" style="left:610.0px;top:294.04px;font-size:13.3px;color:#5e6e82;letter-spacing:0.226px;">sylvia@mail.ru</div><div class="t" style="left:914.0px;top:294.04px;font-size:13.3px;color:#5e6e82;letter-spacing:0.204px;">Bose SoundSport Wireless Headphones</div><div class="t" style="left:1803.4px;top:294.04px;font-size:13.3px;color:#5e6e82;letter-spacing:0.3px">$634</div><svg class="a" style="left:1856px;top:292.8px;" width="13.00" height="13" viewBox="0 0 512 512"><path d="M328 256c0 39.8-32.2 72-72 72s-72-32.2-72-72 32.2-72 72-72 72 32.2 72 72zm104-72c-39.8 0-72 32.2-72 72s32.2 72 72 72 72-32.2 72-72-32.2-72-72-72zm-352 0c-39.8 0-72 32.2-72 72s32.2 72 72 72 72-32.2 72-72-32.2-72-72-72z" fill="#4d5969"/></svg><div class="a" style="left:1540px;top:291px;width:84px;height:20px;background:#ccf6e4;border-radius:10px"></div><div class="t" style="left:1549.0px;top:295.57px;font-size:11.5px;color:#00864e;font-weight:700;letter-spacing:0.388px;">Success</div><svg class="a" style="left:1603.8px;top:295.5px;" width="10.60" height="10.6" viewBox="0 0 512 512"><path d="M173.898 439.404l-166.4-166.4c-9.997-9.997-9.997-26.206 0-36.204l36.203-36.204c9.997-9.998 26.207-9.998 36.204 0L192 312.69 432.095 72.596c9.997-9.997 26.207-9.997 36.204 0l36.203 36.204c9.997 9.997 9.997 26.206 0 36.204l-294.4 294.401c-9.998 9.997-26.207 9.997-36.204-.001z" fill="#00864e"/></svg><div class="a" style="left:262px;top:357px;width:1642px;height:1px;background:#edf2f9"></div><div class="a" style="left:282px;top:330.5px;width:16px;height:16px;background:#fff;border:1px solid #8392a8;border-radius:4px"></div><div class="t" style="left:319.0px;top:332.04px;font-size:13.3px;color:#2c7be5;letter-spacing:0.258px;-webkit-text-stroke:0.45px #2c7be5">Edgar Allan Poe</div><div class="t" style="left:610.0px;top:332.04px;font-size:13.3px;color:#5e6e82;letter-spacing:0.245px;">edgar@yahoo.com</div><div class="t" style="left:914.0px;top:332.04px;font-size:13.3px;color:#5e6e82;letter-spacing:0.187px;">All-New Fire HD 8 Kids Edition Tablet</div><div class="t" style="left:1803.4px;top:332.04px;font-size:13.3px;color:#5e6e82;letter-spacing:0.3px">$199</div><svg class="a" style="left:1856px;top:330.8px;" width="13.00" height="13" viewBox="0 0 512 512"><path d="M328 256c0 39.8-32.2 72-72 72s-72-32.2-72-72 32.2-72 72-72 72 32.2 72 72zm104-72c-39.8 0-72 32.2-72 72s32.2 72 72 72 72-32.2 72-72-32.2-72-72-72zm-352 0c-39.8 0-72 32.2-72 72s32.2 72 72 72 72-32.2 72-72-32.2-72-72-72z" fill="#4d5969"/></svg><div class="a" style="left:1541px;top:329px;width:82px;height:20px;background:#e3e6ed;border-radius:10px"></div><div class="t" style="left:1550.0px;top:333.57px;font-size:11.5px;color:#748194;font-weight:700;letter-spacing:0.544px;">Blocked</div><svg class="a" style="left:1602.6px;top:333.8px;" width="10.80" height="10.8" viewBox="0 0 512 512"><path d="M256 8C119.034 8 8 119.033 8 256s111.034 248 248 248 248-111.034 248-248S392.967 8 256 8zm130.108 117.892c65.448 65.448 70 165.481 20.677 235.637L150.47 105.216c70.204-49.356 170.226-44.735 235.638 20.676zM125.892 386.108c-65.448-65.448-70-165.481-20.677-235.637L361.53 406.784c-70.203 49.356-170.226 44.736-235.638-20.676z" fill="#748194"/></svg><div class="a" style="left:262px;top:395px;width:1642px;height:1px;background:#edf2f9"></div><div class="a" style="left:282px;top:368.5px;width:16px;height:16px;background:#fff;border:1px solid #8392a8;border-radius:4px"></div><div class="t" style="left:319.0px;top:370.04px;font-size:13.3px;color:#2c7be5;letter-spacing:0.604px;-webkit-text-stroke:0.45px #2c7be5">William Butler Yeats</div><div class="t" style="left:610.0px;top:370.04px;font-size:13.3px;color:#5e6e82;letter-spacing:0.312px;">william@gmail.com</div><div class="t" style="left:914.0px;top:370.04px;font-size:13.3px;color:#5e6e82;letter-spacing:-0.088px;">Apple iPhone XR (64GB)</div><div class="t" style="left:1803.4px;top:370.04px;font-size:13.3px;color:#5e6e82;letter-spacing:0.3px">$798</div><svg class="a" style="left:1856px;top:368.8px;" width="13.00" height="13" viewBox="0 0 512 512"><path d="M328 256c0 39.8-32.2 72-72 72s-72-32.2-72-72 32.2-72 72-72 72 32.2 72 72zm104-72c-39.8 0-72 32.2-72 72s32.2 72 72 72 72-32.2 72-72-32.2-72-72-72zm-352 0c-39.8 0-72 32.2-72 72s32.2 72 72 72 72-32.2 72-72-32.2-72-72-72z" fill="#4d5969"/></svg><div class="a" style="left:1540px;top:367px;width:84px;height:20px;background:#ccf6e4;border-radius:10px"></div><div class="t" style="left:1549.0px;top:371.57px;font-size:11.5px;color:#00864e;font-weight:700;letter-spacing:0.388px;">Success</div><svg class="a" style="left:1603.8px;top:371.5px;" width="10.60" height="10.6" viewBox="0 0 512 512"><path d="M173.898 439.404l-166.4-166.4c-9.997-9.997-9.997-26.206 0-36.204l36.203-36.204c9.997-9.998 26.207-9.998 36.204 0L192 312.69 432.095 72.596c9.997-9.997 26.207-9.997 36.204 0l36.203 36.204c9.997 9.997 9.997 26.206 0 36.204l-294.4 294.401c-9.998 9.997-26.207 9.997-36.204-.001z" fill="#00864e"/></svg><div class="a" style="left:262px;top:433px;width:1642px;height:1px;background:#edf2f9"></div><div class="a" style="left:282px;top:406.5px;width:16px;height:16px;background:#fff;border:1px solid #8392a8;border-radius:4px"></div><div class="t" style="left:319.0px;top:408.04px;font-size:13.3px;color:#2c7be5;letter-spacing:0.668px;-webkit-text-stroke:0.45px #2c7be5">Rabindranath Tagore</div><div class="t" style="left:610.0px;top:408.04px;font-size:13.3px;color:#5e6e82;letter-spacing:0.484px;">tagore@twitter.com</div><div class="t" style="left:914.0px;top:408.04px;font-size:13.3px;color:#5e6e82;letter-spacing:-0.080px;">ASUS Chromebook C202SA-YS02 11.6&quot;</div><div class="t" style="left:1803.4px;top:408.04px;font-size:13.3px;color:#5e6e82;letter-spacing:0.3px">$318</div><svg class="a" style="left:1856px;top:406.8px;" width="13.00" height="13" viewBox="0 0 512 512"><path d="M328 256c0 39.8-32.2 72-72 72s-72-32.2-72-72 32.2-72 72-72 72 32.2 72 72zm104-72c-39.8 0-72 32.2-72 72s32.2 72 72 72 72-32.2 72-72-32.2-72-72-72zm-352 0c-39.8 0-72 32.2-72 72s32.2 72 72 72 72-32.2 72-72-32.2-72-72-72z" fill="#4d5969"/></svg><div class="a" style="left:1541px;top:405px;width:82px;height:20px;background:#e3e6ed;border-radius:10px"></div><div class="t" style="left:1550.0px;top:409.57px;font-size:11.5px;color:#748194;font-weight:700;letter-spacing:0.544px;">Blocked</div><svg class="a" style="left:1602.6px;top:409.8px;" width="10.80" height="10.8" viewBox="0 0 512 512"><path d="M256 8C119.034 8 8 119.033 8 256s111.034 248 248 248 248-111.034 248-248S392.967 8 256 8zm130.108 117.892c65.448 65.448 70 165.481 20.677 235.637L150.47 105.216c70.204-49.356 170.226-44.735 235.638 20.676zM125.892 386.108c-65.448-65.448-70-165.481-20.677-235.637L361.53 406.784c-70.203 49.356-170.226 44.736-235.638-20.676z" fill="#748194"/></svg><div class="a" style="left:262px;top:471px;width:1642px;height:1px;background:#edf2f9"></div><div class="a" style="left:282px;top:444.5px;width:16px;height:16px;background:#fff;border:1px solid #8392a8;border-radius:4px"></div><div class="t" style="left:319.0px;top:446.04px;font-size:13.3px;color:#2c7be5;letter-spacing:0.510px;-webkit-text-stroke:0.45px #2c7be5">Emily Dickinson</div><div class="t" style="left:610.0px;top:446.04px;font-size:13.3px;color:#5e6e82;letter-spacing:0.276px;">emily@gmail.com</div><div class="t" style="left:914.0px;top:446.04px;font-size:13.3px;color:#5e6e82;letter-spacing:0.255px;">Mirari OK to Wake! Alarm Clock &amp; Night-Light</div><div class="t" style="left:1811.8px;top:446.04px;font-size:13.3px;color:#5e6e82;letter-spacing:0.3px">$11</div><svg class="a" style="left:1856px;top:444.8px;" width="13.00" height="13" viewBox="0 0 512 512"><path d="M328 256c0 39.8-32.2 72-72 72s-72-32.2-72-72 32.2-72 72-72 72 32.2 72 72zm104-72c-39.8 0-72 32.2-72 72s32.2 72 72 72 72-32.2 72-72-32.2-72-72-72zm-352 0c-39.8 0-72 32.2-72 72s32.2 72 72 72 72-32.2 72-72-32.2-72-72-72z" fill="#4d5969"/></svg><div class="a" style="left:1540px;top:443px;width:84px;height:20px;background:#fde6d8;border-radius:10px"></div><div class="t" style="left:1549.0px;top:447.57px;font-size:11.5px;color:#c46632;font-weight:700;letter-spacing:0.774px;">Pending</div><svg class="a" style="left:1604px;top:447.5px;" width="9.80" height="9.8" viewBox="0 0 512 512"><path d="M16 128h416c8.84 0 16-7.16 16-16V48c0-8.84-7.16-16-16-16H16C7.16 32 0 39.16 0 48v64c0 8.84 7.16 16 16 16zm480 80H80c-8.84 0-16 7.16-16 16v64c0 8.84 7.16 16 16 16h416c8.84 0 16-7.16 16-16v-64c0-8.84-7.16-16-16-16zm-64 176H16c-8.84 0-16 7.16-16 16v64c0 8.84 7.16 16 16 16h416c8.84 0 16-7.16 16-16v-64c0-8.84-7.16-16-16-16z" fill="#c46632"/></svg><div class="a" style="left:262px;top:509px;width:1642px;height:1px;background:#edf2f9"></div><div class="a" style="left:282px;top:482.5px;width:16px;height:16px;background:#fff;border:1px solid #8392a8;border-radius:4px"></div><div class="t" style="left:319.0px;top:484.04px;font-size:13.3px;color:#2c7be5;letter-spacing:0.365px;-webkit-text-stroke:0.45px #2c7be5">Giovanni Boccaccio</div><div class="t" style="left:610.0px;top:484.04px;font-size:13.3px;color:#5e6e82;letter-spacing:0.382px;">giovanni@outlook.com</div><div class="t" style="left:914.0px;top:484.04px;font-size:13.3px;color:#5e6e82;letter-spacing:0.314px;">Summer Infant Contoured Changing Pad</div><div class="t" style="left:1810.8px;top:484.04px;font-size:13.3px;color:#5e6e82;letter-spacing:0.3px">$31</div><svg class="a" style="left:1856px;top:482.8px;" width="13.00" height="13" viewBox="0 0 512 512"><path d="M328 256c0 39.8-32.2 72-72 72s-72-32.2-72-72 32.2-72 72-72 72 32.2 72 72zm104-72c-39.8 0-72 32.2-72 72s32.2 72 72 72 72-32.2 72-72-32.2-72-72-72zm-352 0c-39.8 0-72 32.2-72 72s32.2 72 72 72 72-32.2 72-72-32.2-72-72-72z" fill="#4d5969"/></svg><div class="a" style="left:1540px;top:481px;width:84px;height:20px;background:#ccf6e4;border-radius:10px"></div><div class="t" style="left:1549.0px;top:485.57px;font-size:11.5px;color:#00864e;font-weight:700;letter-spacing:0.388px;">Success</div><svg class="a" style="left:1603.8px;top:485.5px;" width="10.60" height="10.6" viewBox="0 0 512 512"><path d="M173.898 439.404l-166.4-166.4c-9.997-9.997-9.997-26.206 0-36.204l36.203-36.204c9.997-9.998 26.207-9.998 36.204 0L192 312.69 432.095 72.596c9.997-9.997 26.207-9.997 36.204 0l36.203 36.204c9.997 9.997 9.997 26.206 0 36.204l-294.4 294.401c-9.998 9.997-26.207 9.997-36.204-.001z" fill="#00864e"/></svg><div class="a" style="left:262px;top:547px;width:1642px;height:1px;background:#d8e2ef"></div><div class="a" style="left:282px;top:520.5px;width:16px;height:16px;background:#fff;border:1px solid #8392a8;border-radius:4px"></div><div class="t" style="left:319.0px;top:522.04px;font-size:13.3px;color:#2c7be5;letter-spacing:0.358px;-webkit-text-stroke:0.45px #2c7be5">Oscar Wilde</div><div class="t" style="left:610.0px;top:522.04px;font-size:13.3px;color:#5e6e82;letter-spacing:0.330px;">oscar@hotmail.com</div><div class="t" style="left:914.0px;top:522.04px;font-size:13.3px;color:#5e6e82;letter-spacing:0.178px;">Munchkin 6 Piece Fork and Spoon Set</div><div class="t" style="left:1810.8px;top:522.04px;font-size:13.3px;color:#5e6e82;letter-spacing:0.3px">$43</div><svg class="a" style="left:1856px;top:520.8px;" width="13.00" height="13" viewBox="0 0 512 512"><path d="M328 256c0 39.8-32.2 72-72 72s-72-32.2-72-72 32.2-72 72-72 72 32.2 72 72zm104-72c-39.8 0-72 32.2-72 72s32.2 72 72 72 72-32.2 72-72-32.2-72-72-72zm-352 0c-39.8 0-72 32.2-72 72s32.2 72 72 72 72-32.2 72-72-32.2-72-72-72z" fill="#4d5969"/></svg><div class="a" style="left:1540px;top:519px;width:84px;height:20px;background:#ccf6e4;border-radius:10px"></div><div class="t" style="left:1549.0px;top:523.57px;font-size:11.5px;color:#00864e;font-weight:700;letter-spacing:0.388px;">Success</div><svg class="a" style="left:1603.8px;top:523.5px;" width="10.60" height="10.6" viewBox="0 0 512 512"><path d="M173.898 439.404l-166.4-166.4c-9.997-9.997-9.997-26.206 0-36.204l36.203-36.204c9.997-9.998 26.207-9.998 36.204 0L192 312.69 432.095 72.596c9.997-9.997 26.207-9.997 36.204 0l36.203 36.204c9.997 9.997 9.997 26.206 0 36.204l-294.4 294.401c-9.998 9.997-26.207 9.997-36.204-.001z" fill="#00864e"/></svg><div class="t" style="left:282.0px;top:571.74px;font-size:13.3px;color:#5e6e82;letter-spacing:0.276px;">1 to 8 Items of 11 —</div><div class="t" style="left:409.3px;top:571.74px;font-size:13.3px;color:#2c7be5;letter-spacing:0.485px;-webkit-text-stroke:0.45px #2c7be5">view all</div><svg class="a" style="left:461px;top:574.6px;" width="5.94" height="9.5" viewBox="0 0 320 512"><path d="M285.476 272.971L91.132 467.314c-9.373 9.373-24.569 9.373-33.941 0l-22.667-22.667c-9.357-9.357-9.375-24.522-.04-33.901L188.505 256 34.484 101.255c-9.335-9.379-9.317-24.544.04-33.901l22.667-22.667c9.373-9.373 24.569-9.373 33.941 0L285.475 239.03c9.373 9.372 9.373 24.568.001 33.941z" fill="#2c7be5"/></svg><div class="a" style="left:1673px;top:564px;width:116px;height:29px;background:#f9fafd;border-radius:4px"></div><div class="t" style="left:1702.0px;top:571.15px;font-size:14px;color:#748194;letter-spacing:0.505px;">Previous</div><div class="a" style="left:1797px;top:564px;width:88px;height:29px;background:#2c7be5;border-radius:4px"></div><div class="t" style="left:1826.0px;top:571.15px;font-size:14px;color:#fff;letter-spacing:0.405px;">Next</div><div class="card" style="left:262px;top:629px;width:539px;height:300px;background:linear-gradient(135deg,#0c80d5 0%,#0571c5 45%,#035db3 100%)"></div><div class="t" style="left:283.0px;top:646.62px;font-size:19px;color:#fff;letter-spacing:1.198px;-webkit-text-stroke:0.2px #fff">Active users right now</div><svg class="a" style="left:0;top:0" width="420" height="740" viewBox="0 0 420 740"><g stroke="#fff" stroke-width="4.6" fill="none"><path d="M289,698 L306,685.5"/><path d="M306.2,683.8 V733.4"/><path d="M327.5,698 L344.5,685.5"/><path d="M344.7,683.8 V733.4"/><path d="M366.5,692.5 C369.5,687 374.5,684.5 380.5,684.5 C389.5,684.5 394.5,690.5 394.5,697.5 C394.5,705.5 389.5,711.5 380.5,719.5 L368.5,731.1 H397.5"/></g></svg><div class="t" style="left:283.0px;top:777.74px;font-size:13.3px;color:rgba(255,255,255,.9);letter-spacing:0.075px;">Page views per second</div><div class="a" style="left:283px;top:803px;width:498px;height:1px;background:rgba(255,255,255,.22)"></div><div class="a" style="left:285px;top:846px;width:18px;height:56px;background:rgba(255,255,255,.35)"></div><div class="a" style="left:305px;top:831px;width:18px;height:71px;background:rgba(255,255,255,.35)"></div><div class="a" style="left:325px;top:844px;width:18px;height:58px;background:rgba(255,255,255,.35)"></div><div class="a" style="left:625px;top:898px;width:18px;height:4px;background:rgba(255,255,255,.35)"></div><div class="card" style="left:817px;top:629px;width:1087px;height:300px;background:#f9fafd"></div><div class="t" style="left:838.0px;top:651.22px;font-size:19px;color:#344050;letter-spacing:1.139px;-webkit-text-stroke:0.2px #344050">Active users</div><svg class="a" style="left:1857px;top:651.5px;" width="13.00" height="13" viewBox="0 0 512 512"><path d="M328 256c0 39.8-32.2 72-72 72s-72-32.2-72-72 32.2-72 72-72 72 32.2 72 72zm104-72c-39.8 0-72 32.2-72 72s32.2 72 72 72 72-32.2 72-72-32.2-72-72-72zm-352 0c-39.8 0-72 32.2-72 72s32.2 72 72 72 72-32.2 72-72-32.2-72-72-72z" fill="#4d5969"/></svg><div class="a" style="left:817px;top:690px;width:1087px;height:212px;overflow:hidden"><svg width="1087" height="212" viewBox="0 0 1087 212"><rect x="0" y="0" width="1087" height="212" fill="#d5dde6"/><path d="M-1159.9,8.2 L-1148.5,-14.1 L-1125.7,-35.2 L-1083.1,-22.2 L-1051.8,-22.2 L-1009.1,-14.1 L-966.4,-6.3 L-938.0,-14.1 L-915.2,-6.3 L-912.4,8.2 L-916.7,18.4 L-908.1,24.9 L-903.9,31.8 L-895.3,32.4 L-889.6,34.2 L-886.2,39.0 L-881.1,40.2 L-880.0,44.8 L-880.5,50.5 L-878.3,53.8 L-874.9,55.4 L-871.2,52.7 L-868.3,48.2 L-866.3,44.3 L-864.0,48.8 L-861.2,55.9 L-858.4,60.7 L-856.9,66.4 L-852.7,71.0 L-847.0,75.4 L-844.1,78.8 L-840.4,85.5 L-844.1,90.1 L-852.7,95.0 L-864.0,95.0 L-871.2,95.9 L-878.3,103.3 L-882.5,108.8 L-878.3,104.6 L-869.7,99.4 L-865.5,100.7 L-868.3,105.4 L-866.0,110.0 L-861.2,112.1 L-855.5,114.5 L-852.7,112.5 L-855.5,117.8 L-864.0,119.0 L-869.7,122.9 L-872.6,118.6 L-881.1,122.1 L-882.8,126.4 L-881.1,129.5 L-885.4,131.0 L-892.5,134.0 L-892.5,138.1 L-895.3,141.8 L-898.2,147.2 L-896.8,153.2 L-901.0,155.6 L-905.3,158.3 L-911.0,163.4 L-913.3,167.8 L-911.0,176.0 L-909.6,182.4 L-911.0,186.5 L-913.8,185.5 L-916.7,179.2 L-917.5,174.3 L-920.9,171.1 L-926.6,169.8 L-932.3,169.4 L-936.6,170.4 L-935.7,174.3 L-940.8,173.4 L-948.0,172.1 L-952.2,173.4 L-957.9,178.2 L-959.3,185.5 L-959.9,194.9 L-958.5,199.5 L-953.6,206.1 L-950.8,207.9 L-943.7,206.7 L-939.4,204.0 L-938.9,199.5 L-932.3,198.0 L-929.5,198.0 L-930.9,205.5 L-932.9,210.0 L-932.3,214.5 L-920.9,215.1 L-918.7,217.7 L-919.5,229.1 L-913.8,235.5 L-903.9,234.0 L-901.6,237.8 L-906.7,240.6 L-910.4,239.5 L-915.2,237.2 L-922.4,232.6 L-925.8,229.1 L-930.9,223.3 L-942.3,220.7 L-950.8,214.5 L-956.5,215.4 L-966.4,211.8 L-976.4,207.6 L-982.1,201.6 L-981.5,196.4 L-984.9,192.4 L-989.2,186.8 L-993.5,184.0 L-996.6,178.5 L-1001.1,174.3 L-1003.4,168.8 L-1008.5,165.8 L-1006.8,171.1 L-1002.9,176.0 L-1000.0,182.4 L-995.7,189.6 L-993.8,193.0 L-996.3,191.8 L-1000.6,187.7 L-1001.7,182.4 L-1007.7,177.9 L-1007.1,172.7 L-1012.0,169.4 L-1015.4,162.1 L-1019.1,157.7 L-1025.0,155.6 L-1028.5,148.9 L-1030.4,145.0 L-1033.9,140.0 L-1035.6,134.8 L-1035.3,128.7 L-1036.1,122.9 L-1034.4,112.1 L-1036.7,102.9 L-1031.9,103.3 L-1030.4,107.5 L-1031.0,100.3 L-1038.4,95.0 L-1044.7,91.4 L-1046.9,85.5 L-1052.3,75.0 L-1056.0,70.0 L-1060.3,61.3 L-1067.4,54.3 L-1073.1,52.7 L-1080.2,47.7 L-1088.8,46.0 L-1097.3,41.9 L-1104.4,46.0 L-1108.7,39.0 L-1113.5,48.8 L-1119.5,50.5 L-1120.6,58.6 L-1127.2,64.9 L-1135.7,70.0 L-1142.8,72.5 L-1149.9,75.0 L-1144.2,68.5 L-1137.1,64.9 L-1132.8,59.2 L-1128.6,52.7 L-1134.3,53.8 L-1142.8,50.5 L-1149.9,43.1 L-1152.2,35.4 L-1149.9,27.4 L-1140.0,23.0 L-1140.0,18.4 L-1151.3,17.8 L-1155.6,13.1 L-1159.9,8.2Z M-610.9,-30.8 L-639.3,-12.5 L-646.4,8.2 L-653.6,21.7 L-667.8,34.2 L-667.2,48.8 L-664.9,55.9 L-659.2,56.5 L-653.0,50.5 L-649.9,52.7 L-648.4,59.2 L-646.2,66.4 L-642.2,70.5 L-636.8,67.0 L-635.1,60.7 L-634.5,54.3 L-628.8,48.8 L-632.8,41.9 L-632.5,32.4 L-628.0,24.9 L-620.8,17.8 L-618.0,9.6 L-610.0,13.1 L-610.3,17.1 L-615.2,23.0 L-621.7,29.3 L-620.8,40.2 L-616.9,46.5 L-608.0,43.7 L-598.1,45.4 L-602.4,48.8 L-613.7,49.4 L-615.4,53.8 L-612.6,59.7 L-614.0,62.3 L-618.0,58.6 L-621.4,60.2 L-622.3,69.0 L-625.1,73.0 L-629.4,73.5 L-630.8,74.5 L-636.5,75.9 L-641.3,77.9 L-646.4,75.4 L-650.7,77.4 L-653.6,75.0 L-652.1,65.9 L-652.4,59.2 L-657.8,61.8 L-659.0,64.9 L-657.5,71.0 L-657.0,76.4 L-657.8,79.8 L-662.1,79.8 L-666.4,80.7 L-668.6,84.5 L-672.0,89.6 L-677.4,91.9 L-681.4,98.1 L-685.7,98.1 L-686.6,97.2 L-686.6,101.6 L-690.5,101.1 L-695.4,102.9 L-694.2,105.4 L-689.1,107.5 L-685.4,112.9 L-685.4,119.0 L-686.3,123.3 L-692.0,122.9 L-699.1,122.5 L-704.8,122.1 L-708.5,124.5 L-707.0,128.7 L-707.0,134.4 L-709.0,140.7 L-707.0,142.5 L-707.3,147.2 L-703.3,146.8 L-699.9,147.9 L-697.9,150.7 L-694.8,148.2 L-688.3,148.2 L-683.7,145.0 L-681.4,141.0 L-682.9,138.1 L-679.4,132.9 L-672.9,129.1 L-673.2,124.5 L-669.2,123.3 L-663.5,124.5 L-660.7,121.7 L-657.0,119.4 L-653.0,121.3 L-651.6,125.3 L-647.0,129.9 L-643.0,131.8 L-637.3,136.3 L-637.6,142.9 L-636.2,143.9 L-634.8,141.8 L-633.4,138.5 L-635.1,137.0 L-633.1,134.4 L-629.4,135.5 L-630.8,133.7 L-636.5,130.6 L-638.8,129.1 L-642.2,126.4 L-643.3,122.9 L-647.0,118.6 L-646.7,115.3 L-643.0,114.1 L-641.6,116.6 L-638.8,120.2 L-633.6,124.1 L-629.4,127.2 L-626.5,129.5 L-626.8,134.8 L-624.8,137.7 L-622.3,142.5 L-620.6,147.9 L-617.1,149.3 L-616.6,143.9 L-613.7,142.9 L-617.1,138.9 L-615.7,135.5 L-613.7,133.3 L-608.0,133.3 L-607.5,136.3 L-607.2,138.9 L-605.2,142.1 L-604.6,146.1 L-601.8,148.2 L-597.5,150.4 L-595.0,148.2 L-589.6,150.4 L-583.6,147.9 L-579.3,147.9 L-580.2,151.4 L-579.9,155.6 L-581.0,158.3 L-582.4,161.7 L-583.9,165.8 L-584.7,166.8 L-588.1,167.4 L-590.4,167.1 L-593.8,166.1 L-597.5,167.1 L-602.4,167.4 L-610.6,165.8 L-616.0,163.8 L-619.4,161.4 L-624.8,163.8 L-626.2,169.4 L-629.4,169.4 L-637.9,165.8 L-638.8,163.4 L-644.5,161.4 L-649.3,160.7 L-651.3,157.7 L-651.0,152.5 L-650.4,147.9 L-653.0,146.5 L-655.0,146.1 L-658.1,147.5 L-661.5,146.8 L-667.8,147.9 L-673.5,147.9 L-677.7,148.6 L-683.4,151.4 L-688.3,153.9 L-694.8,153.5 L-697.4,151.1 L-699.6,152.5 L-701.6,157.3 L-706.2,160.0 L-709.3,163.8 L-709.9,169.1 L-711.3,173.7 L-714.7,176.6 L-718.7,177.9 L-723.0,183.0 L-724.7,187.7 L-727.5,191.2 L-728.1,195.8 L-730.6,199.5 L-728.9,204.3 L-727.5,207.0 L-728.4,213.0 L-730.4,217.4 L-731.8,218.3 L-729.2,221.8 L-729.8,225.3 L-724.7,229.1 L-720.4,233.5 L-717.6,238.3 L-713.3,242.1 L-704.8,247.8 L-693.4,245.8 L-676.3,242.6 L-667.8,244.9 L-662.1,248.1 L-655.0,252.1 L-655.0,260.6 L-562.5,260.6 L-551.2,253.5 L-542.6,243.5 L-536.6,230.3 L-536.4,226.8 L-545.5,228.5 L-555.4,230.9 L-559.1,227.4 L-560.5,224.5 L-564.0,221.0 L-568.2,216.0 L-571.1,212.1 L-572.8,207.9 L-575.9,199.5 L-577.0,194.9 L-580.7,190.6 L-583.9,184.0 L-586.4,179.2 L-589.3,171.7 L-589.6,170.4 L-587.0,176.6 L-584.7,178.2 L-583.6,175.6 L-582.7,172.7 L-580.7,178.5 L-578.2,184.0 L-575.3,189.3 L-571.6,196.4 L-570.8,198.9 L-568.2,203.1 L-564.5,209.1 L-561.1,214.5 L-560.3,218.9 L-558.8,224.2 L-555.4,224.2 L-552.6,222.4 L-543.5,220.4 L-533.5,215.7 L-524.7,210.6 L-521.6,208.8 L-517.6,205.8 L-517.6,201.6 L-515.3,199.2 L-511.9,195.2 L-514.7,191.5 L-519.0,190.6 L-521.6,187.4 L-521.9,183.0 L-524.1,185.5 L-527.0,189.3 L-532.4,189.6 L-535.2,189.0 L-535.8,184.3 L-537.5,187.4 L-539.2,184.3 L-541.2,181.1 L-543.8,177.9 L-545.5,172.7 L-544.0,171.1 L-540.9,171.1 L-538.9,173.7 L-536.4,177.6 L-532.7,179.2 L-527.0,182.1 L-522.1,180.1 L-519.0,184.6 L-512.8,185.9 L-507.1,186.8 L-498.5,186.5 L-492.6,185.9 L-490.3,190.2 L-486.3,192.4 L-482.3,194.6 L-485.7,195.5 L-481.5,199.5 L-475.5,198.6 L-474.9,202.5 L-474.4,207.6 L-473.2,213.9 L-470.1,219.5 L-467.2,227.7 L-465.0,233.5 L-461.6,237.8 L-459.3,235.2 L-456.4,231.1 L-455.0,226.8 L-453.6,222.1 L-454.2,216.8 L-450.7,213.3 L-447.9,211.5 L-442.5,207.0 L-436.0,202.5 L-434.5,198.0 L-430.3,197.3 L-426.9,196.4 L-424.6,194.0 L-420.9,195.5 L-418.6,199.5 L-418.3,201.9 L-414.1,207.0 L-413.5,213.6 L-410.6,215.1 L-405.5,212.1 L-403.8,217.4 L-401.8,223.0 L-401.8,232.0 L-399.0,240.6 L-396.1,252.1 L-387.6,256.3 L-386.2,252.1 L-388.2,246.4 L-391.6,242.9 L-394.7,240.9 L-397.0,236.3 L-399.8,231.1 L-399.0,226.2 L-397.6,221.8 L-395.0,222.1 L-393.9,224.2 L-390.2,225.6 L-389.0,229.1 L-385.3,230.6 L-383.3,236.0 L-378.5,233.5 L-372.5,228.2 L-371.1,222.1 L-372.2,216.6 L-376.2,212.7 L-380.2,207.6 L-381.3,205.5 L-378.5,200.4 L-374.8,198.0 L-369.7,198.0 L-368.0,201.6 L-364.3,197.7 L-359.2,195.8 L-357.2,194.9 L-350.6,193.7 L-346.6,189.6 L-342.1,185.5 L-341.5,181.4 L-338.1,177.6 L-335.8,172.7 L-337.0,168.8 L-335.3,165.4 L-339.0,160.0 L-342.9,155.6 L-339.8,150.4 L-333.6,147.5 L-336.4,145.4 L-340.7,145.7 L-343.8,145.7 L-346.4,142.9 L-347.5,140.0 L-344.1,139.2 L-338.4,134.4 L-335.3,133.3 L-337.0,137.7 L-334.4,138.1 L-328.4,136.6 L-325.6,138.1 L-327.0,142.9 L-325.6,145.0 L-322.2,145.4 L-323.0,149.7 L-322.2,155.9 L-319.3,155.6 L-314.2,153.5 L-313.6,147.9 L-316.5,142.5 L-319.3,137.4 L-313.6,133.3 L-313.1,130.3 L-309.9,127.6 L-305.4,123.7 L-301.7,125.3 L-296.6,121.3 L-290.3,114.1 L-283.2,103.3 L-282.4,95.9 L-279.8,85.9 L-281.8,79.8 L-289.5,77.4 L-291.7,77.4 L-297.4,73.5 L-293.2,68.0 L-288.9,63.4 L-282.4,58.1 L-277.2,51.6 L-273.8,49.9 L-267.8,49.4 L-259.6,49.9 L-253.9,48.8 L-249.1,52.1 L-243.1,50.5 L-241.1,48.2 L-243.4,46.0 L-236.3,37.8 L-228.0,36.0 L-225.8,39.6 L-227.5,43.1 L-221.5,44.3 L-216.4,40.8 L-214.4,46.5 L-219.2,52.1 L-221.5,59.7 L-218.9,65.9 L-222.1,71.0 L-225.8,75.9 L-227.2,81.2 L-232.0,85.5 L-236.6,91.4 L-238.6,83.1 L-239.4,71.5 L-238.6,63.4 L-236.0,58.1 L-231.7,56.5 L-226.3,49.9 L-221.8,43.1 L-216.9,31.2 L-212.7,32.4 L-205.6,42.5 L-198.4,44.8 L-192.8,40.2 L-185.6,35.4 L-177.4,31.2 L-174.3,26.8 L-171.7,20.4 L-168.6,17.8 L-164.3,13.7 L-157.2,16.4 L-152.9,19.1 L-148.7,17.8 L-145.8,11.7 L-140.7,8.2 L-144.4,1.1 L-152.9,-2.6 L-170.0,-14.1 L-226.9,-22.2 L-283.8,-39.7 L-369.1,-93.4 L-482.9,-49.2 L-511.3,-22.2 L-534.1,-10.2 L-556.8,-8.6 L-558.3,6.1 L-565.4,5.4 L-568.8,11.7 L-576.8,15.1 L-582.4,6.8 L-588.1,3.3 L-582.4,2.5 L-573.9,7.5 L-565.4,-4.1 L-568.2,-8.6 L-579.6,-14.9 L-588.1,-18.1 L-596.7,-22.2 L-610.9,-30.8Z M-135.9,8.2 L-124.5,-14.1 L-101.7,-35.2 L-59.1,-22.2 L-27.8,-22.2 L14.9,-14.1 L57.6,-6.3 L86.0,-14.1 L108.8,-6.3 L111.6,8.2 L107.3,18.4 L115.9,24.9 L120.1,31.8 L128.7,32.4 L134.4,34.2 L137.8,39.0 L142.9,40.2 L144.0,44.8 L143.5,50.5 L145.7,53.8 L149.1,55.4 L152.8,52.7 L155.7,48.2 L157.7,44.3 L160.0,48.8 L162.8,55.9 L165.6,60.7 L167.1,66.4 L171.3,71.0 L177.0,75.4 L179.9,78.8 L183.6,85.5 L179.9,90.1 L171.3,95.0 L160.0,95.0 L152.8,95.9 L145.7,103.3 L141.5,108.8 L145.7,104.6 L154.3,99.4 L158.5,100.7 L155.7,105.4 L158.0,110.0 L162.8,112.1 L168.5,114.5 L171.3,112.5 L168.5,117.8 L160.0,119.0 L154.3,122.9 L151.4,118.6 L142.9,122.1 L141.2,126.4 L142.9,129.5 L138.6,131.0 L131.5,134.0 L131.5,138.1 L128.7,141.8 L125.8,147.2 L127.2,153.2 L123.0,155.6 L118.7,158.3 L113.0,163.4 L110.7,167.8 L113.0,176.0 L114.4,182.4 L113.0,186.5 L110.2,185.5 L107.3,179.2 L106.5,174.3 L103.1,171.1 L97.4,169.8 L91.7,169.4 L87.4,170.4 L88.3,174.3 L83.2,173.4 L76.0,172.1 L71.8,173.4 L66.1,178.2 L64.7,185.5 L64.1,194.9 L65.5,199.5 L70.4,206.1 L73.2,207.9 L80.3,206.7 L84.6,204.0 L85.1,199.5 L91.7,198.0 L94.5,198.0 L93.1,205.5 L91.1,210.0 L91.7,214.5 L103.1,215.1 L105.3,217.7 L104.5,229.1 L110.2,235.5 L120.1,234.0 L122.4,237.8 L117.3,240.6 L113.6,239.5 L108.8,237.2 L101.6,232.6 L98.2,229.1 L93.1,223.3 L81.7,220.7 L73.2,214.5 L67.5,215.4 L57.6,211.8 L47.6,207.6 L41.9,201.6 L42.5,196.4 L39.1,192.4 L34.8,186.8 L30.5,184.0 L27.4,178.5 L22.9,174.3 L20.6,168.8 L15.5,165.8 L17.2,171.1 L21.1,176.0 L24.0,182.4 L28.3,189.6 L30.2,193.0 L27.7,191.8 L23.4,187.7 L22.3,182.4 L16.3,177.9 L16.9,172.7 L12.0,169.4 L8.6,162.1 L4.9,157.7 L-1.0,155.6 L-4.5,148.9 L-6.4,145.0 L-9.9,140.0 L-11.6,134.8 L-11.3,128.7 L-12.1,122.9 L-10.4,112.1 L-12.7,102.9 L-7.9,103.3 L-6.4,107.5 L-7.0,100.3 L-14.4,95.0 L-20.7,91.4 L-22.9,85.5 L-28.3,75.0 L-32.0,70.0 L-36.3,61.3 L-43.4,54.3 L-49.1,52.7 L-56.2,47.7 L-64.8,46.0 L-73.3,41.9 L-80.4,46.0 L-84.7,39.0 L-89.5,48.8 L-95.5,50.5 L-96.6,58.6 L-103.2,64.9 L-111.7,70.0 L-118.8,72.5 L-125.9,75.0 L-120.2,68.5 L-113.1,64.9 L-108.8,59.2 L-104.6,52.7 L-110.3,53.8 L-118.8,50.5 L-125.9,43.1 L-128.2,35.4 L-125.9,27.4 L-116.0,23.0 L-116.0,18.4 L-127.3,17.8 L-131.6,13.1 L-135.9,8.2Z M413.1,-30.8 L384.7,-12.5 L377.6,8.2 L370.4,21.7 L356.2,34.2 L356.8,48.8 L359.1,55.9 L364.8,56.5 L371.0,50.5 L374.1,52.7 L375.6,59.2 L377.8,66.4 L381.8,70.5 L387.2,67.0 L388.9,60.7 L389.5,54.3 L395.2,48.8 L391.2,41.9 L391.5,32.4 L396.0,24.9 L403.2,17.8 L406.0,9.6 L414.0,13.1 L413.7,17.1 L408.8,23.0 L402.3,29.3 L403.2,40.2 L407.1,46.5 L416.0,43.7 L425.9,45.4 L421.6,48.8 L410.3,49.4 L408.6,53.8 L411.4,59.7 L410.0,62.3 L406.0,58.6 L402.6,60.2 L401.7,69.0 L398.9,73.0 L394.6,73.5 L393.2,74.5 L387.5,75.9 L382.7,77.9 L377.6,75.4 L373.3,77.4 L370.4,75.0 L371.9,65.9 L371.6,59.2 L366.2,61.8 L365.0,64.9 L366.5,71.0 L367.0,76.4 L366.2,79.8 L361.9,79.8 L357.6,80.7 L355.4,84.5 L352.0,89.6 L346.6,91.9 L342.6,98.1 L338.3,98.1 L337.4,97.2 L337.4,101.6 L333.5,101.1 L328.6,102.9 L329.8,105.4 L334.9,107.5 L338.6,112.9 L338.6,119.0 L337.7,123.3 L332.0,122.9 L324.9,122.5 L319.2,122.1 L315.5,124.5 L317.0,128.7 L317.0,134.4 L315.0,140.7 L317.0,142.5 L316.7,147.2 L320.7,146.8 L324.1,147.9 L326.1,150.7 L329.2,148.2 L335.7,148.2 L340.3,145.0 L342.6,141.0 L341.1,138.1 L344.6,132.9 L351.1,129.1 L350.8,124.5 L354.8,123.3 L360.5,124.5 L363.3,121.7 L367.0,119.4 L371.0,121.3 L372.4,125.3 L377.0,129.9 L381.0,131.8 L386.7,136.3 L386.4,142.9 L387.8,143.9 L389.2,141.8 L390.6,138.5 L388.9,137.0 L390.9,134.4 L394.6,135.5 L393.2,133.7 L387.5,130.6 L385.2,129.1 L381.8,126.4 L380.7,122.9 L377.0,118.6 L377.3,115.3 L381.0,114.1 L382.4,116.6 L385.2,120.2 L390.4,124.1 L394.6,127.2 L397.5,129.5 L397.2,134.8 L399.2,137.7 L401.7,142.5 L403.4,147.9 L406.9,149.3 L407.4,143.9 L410.3,142.9 L406.9,138.9 L408.3,135.5 L410.3,133.3 L416.0,133.3 L416.5,136.3 L416.8,138.9 L418.8,142.1 L419.4,146.1 L422.2,148.2 L426.5,150.4 L429.0,148.2 L434.4,150.4 L440.4,147.9 L444.7,147.9 L443.8,151.4 L444.1,155.6 L443.0,158.3 L441.6,161.7 L440.1,165.8 L439.3,166.8 L435.9,167.4 L433.6,167.1 L430.2,166.1 L426.5,167.1 L421.6,167.4 L413.4,165.8 L408.0,163.8 L404.6,161.4 L399.2,163.8 L397.8,169.4 L394.6,169.4 L386.1,165.8 L385.2,163.4 L379.5,161.4 L374.7,160.7 L372.7,157.7 L373.0,152.5 L373.6,147.9 L371.0,146.5 L369.0,146.1 L365.9,147.5 L362.5,146.8 L356.2,147.9 L350.5,147.9 L346.3,148.6 L340.6,151.4 L335.7,153.9 L329.2,153.5 L326.6,151.1 L324.4,152.5 L322.4,157.3 L317.8,160.0 L314.7,163.8 L314.1,169.1 L312.7,173.7 L309.3,176.6 L305.3,177.9 L301.0,183.0 L299.3,187.7 L296.5,191.2 L295.9,195.8 L293.4,199.5 L295.1,204.3 L296.5,207.0 L295.6,213.0 L293.6,217.4 L292.2,218.3 L294.8,221.8 L294.2,225.3 L299.3,229.1 L303.6,233.5 L306.4,238.3 L310.7,242.1 L319.2,247.8 L330.6,245.8 L347.7,242.6 L356.2,244.9 L361.9,248.1 L369.0,252.1 L369.0,260.6 L461.5,260.6 L472.8,253.5 L481.4,243.5 L487.4,230.3 L487.6,226.8 L478.5,228.5 L468.6,230.9 L464.9,227.4 L463.5,224.5 L460.0,221.0 L455.8,216.0 L452.9,212.1 L451.2,207.9 L448.1,199.5 L447.0,194.9 L443.3,190.6 L440.1,184.0 L437.6,179.2 L434.7,171.7 L434.4,170.4 L437.0,176.6 L439.3,178.2 L440.4,175.6 L441.3,172.7 L443.3,178.5 L445.8,184.0 L448.7,189.3 L452.4,196.4 L453.2,198.9 L455.8,203.1 L459.5,209.1 L462.9,214.5 L463.7,218.9 L465.2,224.2 L468.6,224.2 L471.4,222.4 L480.5,220.4 L490.5,215.7 L499.3,210.6 L502.4,208.8 L506.4,205.8 L506.4,201.6 L508.7,199.2 L512.1,195.2 L509.3,191.5 L505.0,190.6 L502.4,187.4 L502.1,183.0 L499.9,185.5 L497.0,189.3 L491.6,189.6 L488.8,189.0 L488.2,184.3 L486.5,187.4 L484.8,184.3 L482.8,181.1 L480.2,177.9 L478.5,172.7 L480.0,171.1 L483.1,171.1 L485.1,173.7 L487.6,177.6 L491.3,179.2 L497.0,182.1 L501.9,180.1 L505.0,184.6 L511.2,185.9 L516.9,186.8 L525.5,186.5 L531.4,185.9 L533.7,190.2 L537.7,192.4 L541.7,194.6 L538.3,195.5 L542.5,199.5 L548.5,198.6 L549.1,202.5 L549.6,207.6 L550.8,213.9 L553.9,219.5 L556.8,227.7 L559.0,233.5 L562.4,237.8 L564.7,235.2 L567.6,231.1 L569.0,226.8 L570.4,222.1 L569.8,216.8 L573.3,213.3 L576.1,211.5 L581.5,207.0 L588.0,202.5 L589.5,198.0 L593.7,197.3 L597.1,196.4 L599.4,194.0 L603.1,195.5 L605.4,199.5 L605.7,201.9 L609.9,207.0 L610.5,213.6 L613.4,215.1 L618.5,212.1 L620.2,217.4 L622.2,223.0 L622.2,232.0 L625.0,240.6 L627.9,252.1 L636.4,256.3 L637.8,252.1 L635.8,246.4 L632.4,242.9 L629.3,240.9 L627.0,236.3 L624.2,231.1 L625.0,226.2 L626.4,221.8 L629.0,222.1 L630.1,224.2 L633.8,225.6 L635.0,229.1 L638.7,230.6 L640.7,236.0 L645.5,233.5 L651.5,228.2 L652.9,222.1 L651.8,216.6 L647.8,212.7 L643.8,207.6 L642.7,205.5 L645.5,200.4 L649.2,198.0 L654.3,198.0 L656.0,201.6 L659.7,197.7 L664.8,195.8 L666.8,194.9 L673.4,193.7 L677.4,189.6 L681.9,185.5 L682.5,181.4 L685.9,177.6 L688.2,172.7 L687.0,168.8 L688.7,165.4 L685.0,160.0 L681.1,155.6 L684.2,150.4 L690.4,147.5 L687.6,145.4 L683.3,145.7 L680.2,145.7 L677.6,142.9 L676.5,140.0 L679.9,139.2 L685.6,134.4 L688.7,133.3 L687.0,137.7 L689.6,138.1 L695.6,136.6 L698.4,138.1 L697.0,142.9 L698.4,145.0 L701.8,145.4 L701.0,149.7 L701.8,155.9 L704.7,155.6 L709.8,153.5 L710.4,147.9 L707.5,142.5 L704.7,137.4 L710.4,133.3 L710.9,130.3 L714.1,127.6 L718.6,123.7 L722.3,125.3 L727.4,121.3 L733.7,114.1 L740.8,103.3 L741.6,95.9 L744.2,85.9 L742.2,79.8 L734.5,77.4 L732.3,77.4 L726.6,73.5 L730.8,68.0 L735.1,63.4 L741.6,58.1 L746.8,51.6 L750.2,49.9 L756.2,49.4 L764.4,49.9 L770.1,48.8 L774.9,52.1 L780.9,50.5 L782.9,48.2 L780.6,46.0 L787.7,37.8 L796.0,36.0 L798.2,39.6 L796.5,43.1 L802.5,44.3 L807.6,40.8 L809.6,46.5 L804.8,52.1 L802.5,59.7 L805.1,65.9 L801.9,71.0 L798.2,75.9 L796.8,81.2 L792.0,85.5 L787.4,91.4 L785.4,83.1 L784.6,71.5 L785.4,63.4 L788.0,58.1 L792.3,56.5 L797.7,49.9 L802.2,43.1 L807.1,31.2 L811.3,32.4 L818.4,42.5 L825.6,44.8 L831.2,40.2 L838.4,35.4 L846.6,31.2 L849.7,26.8 L852.3,20.4 L855.4,17.8 L859.7,13.7 L866.8,16.4 L871.1,19.1 L875.3,17.8 L878.2,11.7 L883.3,8.2 L879.6,1.1 L871.1,-2.6 L854.0,-14.1 L797.1,-22.2 L740.2,-39.7 L654.9,-93.4 L541.1,-49.2 L512.7,-22.2 L489.9,-10.2 L467.2,-8.6 L465.7,6.1 L458.6,5.4 L455.2,11.7 L447.2,15.1 L441.6,6.8 L435.9,3.3 L441.6,2.5 L450.1,7.5 L458.6,-4.1 L455.8,-8.6 L444.4,-14.9 L435.9,-18.1 L427.3,-22.2 L413.1,-30.8Z M888.1,8.2 L899.5,-14.1 L922.3,-35.2 L964.9,-22.2 L996.2,-22.2 L1038.9,-14.1 L1081.6,-6.3 L1110.0,-14.1 L1132.8,-6.3 L1135.6,8.2 L1131.3,18.4 L1139.9,24.9 L1144.1,31.8 L1152.7,32.4 L1158.4,34.2 L1161.8,39.0 L1166.9,40.2 L1168.0,44.8 L1167.5,50.5 L1169.7,53.8 L1173.1,55.4 L1176.8,52.7 L1179.7,48.2 L1181.7,44.3 L1184.0,48.8 L1186.8,55.9 L1189.6,60.7 L1191.1,66.4 L1195.3,71.0 L1201.0,75.4 L1203.9,78.8 L1207.6,85.5 L1203.9,90.1 L1195.3,95.0 L1184.0,95.0 L1176.8,95.9 L1169.7,103.3 L1165.5,108.8 L1169.7,104.6 L1178.3,99.4 L1182.5,100.7 L1179.7,105.4 L1182.0,110.0 L1186.8,112.1 L1192.5,114.5 L1195.3,112.5 L1192.5,117.8 L1184.0,119.0 L1178.3,122.9 L1175.4,118.6 L1166.9,122.1 L1165.2,126.4 L1166.9,129.5 L1162.6,131.0 L1155.5,134.0 L1155.5,138.1 L1152.7,141.8 L1149.8,147.2 L1151.2,153.2 L1147.0,155.6 L1142.7,158.3 L1137.0,163.4 L1134.7,167.8 L1137.0,176.0 L1138.4,182.4 L1137.0,186.5 L1134.2,185.5 L1131.3,179.2 L1130.5,174.3 L1127.1,171.1 L1121.4,169.8 L1115.7,169.4 L1111.4,170.4 L1112.3,174.3 L1107.2,173.4 L1100.0,172.1 L1095.8,173.4 L1090.1,178.2 L1088.7,185.5 L1088.1,194.9 L1089.5,199.5 L1094.4,206.1 L1097.2,207.9 L1104.3,206.7 L1108.6,204.0 L1109.1,199.5 L1115.7,198.0 L1118.5,198.0 L1117.1,205.5 L1115.1,210.0 L1115.7,214.5 L1127.1,215.1 L1129.3,217.7 L1128.5,229.1 L1134.2,235.5 L1144.1,234.0 L1146.4,237.8 L1141.3,240.6 L1137.6,239.5 L1132.8,237.2 L1125.6,232.6 L1122.2,229.1 L1117.1,223.3 L1105.7,220.7 L1097.2,214.5 L1091.5,215.4 L1081.6,211.8 L1071.6,207.6 L1065.9,201.6 L1066.5,196.4 L1063.1,192.4 L1058.8,186.8 L1054.5,184.0 L1051.4,178.5 L1046.9,174.3 L1044.6,168.8 L1039.5,165.8 L1041.2,171.1 L1045.1,176.0 L1048.0,182.4 L1052.3,189.6 L1054.2,193.0 L1051.7,191.8 L1047.4,187.7 L1046.3,182.4 L1040.3,177.9 L1040.9,172.7 L1036.0,169.4 L1032.6,162.1 L1028.9,157.7 L1023.0,155.6 L1019.5,148.9 L1017.6,145.0 L1014.1,140.0 L1012.4,134.8 L1012.7,128.7 L1011.9,122.9 L1013.6,112.1 L1011.3,102.9 L1016.1,103.3 L1017.6,107.5 L1017.0,100.3 L1009.6,95.0 L1003.3,91.4 L1001.1,85.5 L995.7,75.0 L992.0,70.0 L987.7,61.3 L980.6,54.3 L974.9,52.7 L967.8,47.7 L959.2,46.0 L950.7,41.9 L943.6,46.0 L939.3,39.0 L934.5,48.8 L928.5,50.5 L927.4,58.6 L920.8,64.9 L912.3,70.0 L905.2,72.5 L898.1,75.0 L903.8,68.5 L910.9,64.9 L915.2,59.2 L919.4,52.7 L913.7,53.8 L905.2,50.5 L898.1,43.1 L895.8,35.4 L898.1,27.4 L908.0,23.0 L908.0,18.4 L896.7,17.8 L892.4,13.1 L888.1,8.2Z M1437.1,-30.8 L1408.7,-12.5 L1401.6,8.2 L1394.4,21.7 L1380.2,34.2 L1380.8,48.8 L1383.1,55.9 L1388.8,56.5 L1395.0,50.5 L1398.1,52.7 L1399.6,59.2 L1401.8,66.4 L1405.8,70.5 L1411.2,67.0 L1412.9,60.7 L1413.5,54.3 L1419.2,48.8 L1415.2,41.9 L1415.5,32.4 L1420.0,24.9 L1427.2,17.8 L1430.0,9.6 L1438.0,13.1 L1437.7,17.1 L1432.8,23.0 L1426.3,29.3 L1427.2,40.2 L1431.1,46.5 L1440.0,43.7 L1449.9,45.4 L1445.6,48.8 L1434.3,49.4 L1432.6,53.8 L1435.4,59.7 L1434.0,62.3 L1430.0,58.6 L1426.6,60.2 L1425.7,69.0 L1422.9,73.0 L1418.6,73.5 L1417.2,74.5 L1411.5,75.9 L1406.7,77.9 L1401.6,75.4 L1397.3,77.4 L1394.4,75.0 L1395.9,65.9 L1395.6,59.2 L1390.2,61.8 L1389.0,64.9 L1390.5,71.0 L1391.0,76.4 L1390.2,79.8 L1385.9,79.8 L1381.6,80.7 L1379.4,84.5 L1376.0,89.6 L1370.6,91.9 L1366.6,98.1 L1362.3,98.1 L1361.4,97.2 L1361.4,101.6 L1357.5,101.1 L1352.6,102.9 L1353.8,105.4 L1358.9,107.5 L1362.6,112.9 L1362.6,119.0 L1361.7,123.3 L1356.0,122.9 L1348.9,122.5 L1343.2,122.1 L1339.5,124.5 L1341.0,128.7 L1341.0,134.4 L1339.0,140.7 L1341.0,142.5 L1340.7,147.2 L1344.7,146.8 L1348.1,147.9 L1350.1,150.7 L1353.2,148.2 L1359.7,148.2 L1364.3,145.0 L1366.6,141.0 L1365.1,138.1 L1368.6,132.9 L1375.1,129.1 L1374.8,124.5 L1378.8,123.3 L1384.5,124.5 L1387.3,121.7 L1391.0,119.4 L1395.0,121.3 L1396.4,125.3 L1401.0,129.9 L1405.0,131.8 L1410.7,136.3 L1410.4,142.9 L1411.8,143.9 L1413.2,141.8 L1414.6,138.5 L1412.9,137.0 L1414.9,134.4 L1418.6,135.5 L1417.2,133.7 L1411.5,130.6 L1409.2,129.1 L1405.8,126.4 L1404.7,122.9 L1401.0,118.6 L1401.3,115.3 L1405.0,114.1 L1406.4,116.6 L1409.2,120.2 L1414.4,124.1 L1418.6,127.2 L1421.5,129.5 L1421.2,134.8 L1423.2,137.7 L1425.7,142.5 L1427.4,147.9 L1430.9,149.3 L1431.4,143.9 L1434.3,142.9 L1430.9,138.9 L1432.3,135.5 L1434.3,133.3 L1440.0,133.3 L1440.5,136.3 L1440.8,138.9 L1442.8,142.1 L1443.4,146.1 L1446.2,148.2 L1450.5,150.4 L1453.0,148.2 L1458.4,150.4 L1464.4,147.9 L1468.7,147.9 L1467.8,151.4 L1468.1,155.6 L1467.0,158.3 L1465.6,161.7 L1464.1,165.8 L1463.3,166.8 L1459.9,167.4 L1457.6,167.1 L1454.2,166.1 L1450.5,167.1 L1445.6,167.4 L1437.4,165.8 L1432.0,163.8 L1428.6,161.4 L1423.2,163.8 L1421.8,169.4 L1418.6,169.4 L1410.1,165.8 L1409.2,163.4 L1403.5,161.4 L1398.7,160.7 L1396.7,157.7 L1397.0,152.5 L1397.6,147.9 L1395.0,146.5 L1393.0,146.1 L1389.9,147.5 L1386.5,146.8 L1380.2,147.9 L1374.5,147.9 L1370.3,148.6 L1364.6,151.4 L1359.7,153.9 L1353.2,153.5 L1350.6,151.1 L1348.4,152.5 L1346.4,157.3 L1341.8,160.0 L1338.7,163.8 L1338.1,169.1 L1336.7,173.7 L1333.3,176.6 L1329.3,177.9 L1325.0,183.0 L1323.3,187.7 L1320.5,191.2 L1319.9,195.8 L1317.4,199.5 L1319.1,204.3 L1320.5,207.0 L1319.6,213.0 L1317.6,217.4 L1316.2,218.3 L1318.8,221.8 L1318.2,225.3 L1323.3,229.1 L1327.6,233.5 L1330.4,238.3 L1334.7,242.1 L1343.2,247.8 L1354.6,245.8 L1371.7,242.6 L1380.2,244.9 L1385.9,248.1 L1393.0,252.1 L1393.0,260.6 L1485.5,260.6 L1496.8,253.5 L1505.4,243.5 L1511.4,230.3 L1511.6,226.8 L1502.5,228.5 L1492.6,230.9 L1488.9,227.4 L1487.5,224.5 L1484.0,221.0 L1479.8,216.0 L1476.9,212.1 L1475.2,207.9 L1472.1,199.5 L1471.0,194.9 L1467.3,190.6 L1464.1,184.0 L1461.6,179.2 L1458.7,171.7 L1458.4,170.4 L1461.0,176.6 L1463.3,178.2 L1464.4,175.6 L1465.3,172.7 L1467.3,178.5 L1469.8,184.0 L1472.7,189.3 L1476.4,196.4 L1477.2,198.9 L1479.8,203.1 L1483.5,209.1 L1486.9,214.5 L1487.7,218.9 L1489.2,224.2 L1492.6,224.2 L1495.4,222.4 L1504.5,220.4 L1514.5,215.7 L1523.3,210.6 L1526.4,208.8 L1530.4,205.8 L1530.4,201.6 L1532.7,199.2 L1536.1,195.2 L1533.3,191.5 L1529.0,190.6 L1526.4,187.4 L1526.1,183.0 L1523.9,185.5 L1521.0,189.3 L1515.6,189.6 L1512.8,189.0 L1512.2,184.3 L1510.5,187.4 L1508.8,184.3 L1506.8,181.1 L1504.2,177.9 L1502.5,172.7 L1504.0,171.1 L1507.1,171.1 L1509.1,173.7 L1511.6,177.6 L1515.3,179.2 L1521.0,182.1 L1525.9,180.1 L1529.0,184.6 L1535.2,185.9 L1540.9,186.8 L1549.5,186.5 L1555.4,185.9 L1557.7,190.2 L1561.7,192.4 L1565.7,194.6 L1562.3,195.5 L1566.5,199.5 L1572.5,198.6 L1573.1,202.5 L1573.6,207.6 L1574.8,213.9 L1577.9,219.5 L1580.8,227.7 L1583.0,233.5 L1586.4,237.8 L1588.7,235.2 L1591.6,231.1 L1593.0,226.8 L1594.4,222.1 L1593.8,216.8 L1597.3,213.3 L1600.1,211.5 L1605.5,207.0 L1612.0,202.5 L1613.5,198.0 L1617.7,197.3 L1621.1,196.4 L1623.4,194.0 L1627.1,195.5 L1629.4,199.5 L1629.7,201.9 L1633.9,207.0 L1634.5,213.6 L1637.4,215.1 L1642.5,212.1 L1644.2,217.4 L1646.2,223.0 L1646.2,232.0 L1649.0,240.6 L1651.9,252.1 L1660.4,256.3 L1661.8,252.1 L1659.8,246.4 L1656.4,242.9 L1653.3,240.9 L1651.0,236.3 L1648.2,231.1 L1649.0,226.2 L1650.4,221.8 L1653.0,222.1 L1654.1,224.2 L1657.8,225.6 L1659.0,229.1 L1662.7,230.6 L1664.7,236.0 L1669.5,233.5 L1675.5,228.2 L1676.9,222.1 L1675.8,216.6 L1671.8,212.7 L1667.8,207.6 L1666.7,205.5 L1669.5,200.4 L1673.2,198.0 L1678.3,198.0 L1680.0,201.6 L1683.7,197.7 L1688.8,195.8 L1690.8,194.9 L1697.4,193.7 L1701.4,189.6 L1705.9,185.5 L1706.5,181.4 L1709.9,177.6 L1712.2,172.7 L1711.0,168.8 L1712.7,165.4 L1709.0,160.0 L1705.1,155.6 L1708.2,150.4 L1714.4,147.5 L1711.6,145.4 L1707.3,145.7 L1704.2,145.7 L1701.6,142.9 L1700.5,140.0 L1703.9,139.2 L1709.6,134.4 L1712.7,133.3 L1711.0,137.7 L1713.6,138.1 L1719.6,136.6 L1722.4,138.1 L1721.0,142.9 L1722.4,145.0 L1725.8,145.4 L1725.0,149.7 L1725.8,155.9 L1728.7,155.6 L1733.8,153.5 L1734.4,147.9 L1731.5,142.5 L1728.7,137.4 L1734.4,133.3 L1734.9,130.3 L1738.1,127.6 L1742.6,123.7 L1746.3,125.3 L1751.4,121.3 L1757.7,114.1 L1764.8,103.3 L1765.6,95.9 L1768.2,85.9 L1766.2,79.8 L1758.5,77.4 L1756.3,77.4 L1750.6,73.5 L1754.8,68.0 L1759.1,63.4 L1765.6,58.1 L1770.8,51.6 L1774.2,49.9 L1780.2,49.4 L1788.4,49.9 L1794.1,48.8 L1798.9,52.1 L1804.9,50.5 L1806.9,48.2 L1804.6,46.0 L1811.7,37.8 L1820.0,36.0 L1822.2,39.6 L1820.5,43.1 L1826.5,44.3 L1831.6,40.8 L1833.6,46.5 L1828.8,52.1 L1826.5,59.7 L1829.1,65.9 L1825.9,71.0 L1822.2,75.9 L1820.8,81.2 L1816.0,85.5 L1811.4,91.4 L1809.4,83.1 L1808.6,71.5 L1809.4,63.4 L1812.0,58.1 L1816.3,56.5 L1821.7,49.9 L1826.2,43.1 L1831.1,31.2 L1835.3,32.4 L1842.4,42.5 L1849.6,44.8 L1855.2,40.2 L1862.4,35.4 L1870.6,31.2 L1873.7,26.8 L1876.3,20.4 L1879.4,17.8 L1883.7,13.7 L1890.8,16.4 L1895.1,19.1 L1899.3,17.8 L1902.2,11.7 L1907.3,8.2 L1903.6,1.1 L1895.1,-2.6 L1878.0,-14.1 L1821.1,-22.2 L1764.2,-39.7 L1678.9,-93.4 L1565.1,-49.2 L1536.7,-22.2 L1513.9,-10.2 L1491.2,-8.6 L1489.7,6.1 L1482.6,5.4 L1479.2,11.7 L1471.2,15.1 L1465.6,6.8 L1459.9,3.3 L1465.6,2.5 L1474.1,7.5 L1482.6,-4.1 L1479.8,-8.6 L1468.4,-14.9 L1459.9,-18.1 L1451.3,-22.2 L1437.1,-30.8Z" fill="#f9faf7"/><path d="M-596.7,40.2 L-592.4,44.8 L-588.7,41.4 L-591.0,36.6 L-595.0,37.2Z M-583.9,39.0 L-579.6,39.6 L-578.7,31.2 L-581.0,29.9 L-584.4,33.0Z M-646.4,52.7 L-642.2,53.2 L-642.7,49.9 L-645.6,49.4Z M-952.2,48.8 L-950.8,54.9 L-945.1,62.3 L-938.0,62.3 L-932.3,65.9 L-923.8,71.0 L-916.4,72.5 L-915.8,82.2 L-911.0,89.1 L-907.3,89.1 L-906.4,79.8 L-901.0,70.0 L-900.5,59.7 L-903.3,48.8 L-903.9,32.4 L-908.1,24.9 L-916.7,18.4 L-923.8,23.0 L-932.3,23.6 L-940.8,30.6 L-948.8,40.8 L-952.2,48.8Z M-926.6,21.7 L-920.9,11.7 L-916.7,4.7 L-914.4,-6.3 L-915.2,-18.1 L-906.7,-26.4 L-892.5,-14.1 L-888.2,-2.6 L-891.1,6.1 L-902.4,12.4 L-909.6,20.4Z M-602.6,129.1 L-602.1,124.1 L-600.1,119.0 L-597.2,116.2 L-594.4,110.8 L-591.0,112.5 L-586.7,114.5 L-589.3,115.7 L-587.3,119.0 L-583.9,118.6 L-580.7,116.6 L-577.9,115.7 L-575.3,117.8 L-573.1,119.8 L-569.1,122.5 L-564.2,128.0 L-564.0,130.6 L-568.2,132.5 L-572.5,132.9 L-577.3,131.4 L-581.0,129.9 L-585.3,128.7 L-589.6,129.5 L-593.3,132.1 L-599.2,131.8 L-602.6,129.1Z M-583.0,114.1 L-581.0,115.7 L-577.9,115.3 L-573.3,111.3 L-570.2,107.9 L-573.1,108.4 L-577.3,110.4 L-582.2,112.1Z M-549.2,117.8 L-546.9,114.5 L-542.6,110.8 L-536.9,108.8 L-531.8,115.7 L-536.4,119.0 L-536.1,124.1 L-532.4,128.0 L-531.8,131.8 L-529.0,133.3 L-530.7,138.9 L-528.7,140.7 L-528.4,145.7 L-534.1,147.9 L-538.9,146.1 L-542.6,142.9 L-542.9,137.7 L-541.2,135.5 L-543.8,129.5 L-546.0,125.6 L-546.9,122.9 L-549.2,117.8Z M-516.5,114.9 L-512.8,112.1 L-507.9,112.9 L-508.5,119.0 L-511.3,121.7 L-514.7,121.7Z M-387.0,88.2 L-383.3,87.8 L-376.2,82.2 L-370.5,72.5 L-370.0,68.5 L-371.7,69.5 L-378.5,79.8 L-384.8,85.9Z M-472.9,110.8 L-468.7,110.4 L-462.4,112.1 L-457.3,110.4 L-456.7,112.9 L-463.0,114.1 L-470.1,113.3Z M-944.0,110.0 L-938.0,110.4 L-930.9,110.8 L-923.8,110.0 L-922.4,110.8 L-923.2,105.4 L-928.0,101.6 L-933.7,103.3 L-936.6,104.6 L-944.0,110.0Z M-932.0,128.7 L-930.9,129.9 L-928.6,129.5 L-927.2,124.9 L-927.5,120.2 L-925.2,115.7 L-923.5,113.7 L-928.0,113.7 L-931.5,117.8 L-931.7,122.9Z M-922.1,113.7 L-919.2,116.2 L-918.7,120.9 L-916.7,124.9 L-914.4,122.9 L-914.1,117.8 L-910.1,117.8 L-911.0,113.7 L-916.7,112.9 L-922.1,113.7Z M-919.2,129.9 L-913.8,130.6 L-907.6,127.2 L-906.7,125.3 L-911.0,126.4 L-916.7,128.3Z M-909.0,123.7 L-903.9,123.7 L-899.0,122.9 L-899.3,120.2 L-903.9,121.3 L-907.6,122.5Z M-957.9,93.7 L-955.9,93.2 L-956.5,85.5 L-959.9,78.4 L-963.0,78.8 L-960.8,86.8 L-958.5,91.4Z M-1037.6,15.1 L-1029.0,11.7 L-1020.5,3.3 L-1026.2,1.1 L-1034.7,4.7 L-1039.0,8.2Z M-1014.8,40.2 L-1006.3,39.0 L-996.3,31.2 L-1000.6,29.9 L-1009.1,31.8 L-1014.8,36.6Z M427.3,40.2 L431.6,44.8 L435.3,41.4 L433.0,36.6 L429.0,37.2Z M440.1,39.0 L444.4,39.6 L445.3,31.2 L443.0,29.9 L439.6,33.0Z M377.6,52.7 L381.8,53.2 L381.3,49.9 L378.4,49.4Z M71.8,48.8 L73.2,54.9 L78.9,62.3 L86.0,62.3 L91.7,65.9 L100.2,71.0 L107.6,72.5 L108.2,82.2 L113.0,89.1 L116.7,89.1 L117.6,79.8 L123.0,70.0 L123.5,59.7 L120.7,48.8 L120.1,32.4 L115.9,24.9 L107.3,18.4 L100.2,23.0 L91.7,23.6 L83.2,30.6 L75.2,40.8 L71.8,48.8Z M97.4,21.7 L103.1,11.7 L107.3,4.7 L109.6,-6.3 L108.8,-18.1 L117.3,-26.4 L131.5,-14.1 L135.8,-2.6 L132.9,6.1 L121.6,12.4 L114.4,20.4Z M421.4,129.1 L421.9,124.1 L423.9,119.0 L426.8,116.2 L429.6,110.8 L433.0,112.5 L437.3,114.5 L434.7,115.7 L436.7,119.0 L440.1,118.6 L443.3,116.6 L446.1,115.7 L448.7,117.8 L450.9,119.8 L454.9,122.5 L459.8,128.0 L460.0,130.6 L455.8,132.5 L451.5,132.9 L446.7,131.4 L443.0,129.9 L438.7,128.7 L434.4,129.5 L430.7,132.1 L424.8,131.8 L421.4,129.1Z M441.0,114.1 L443.0,115.7 L446.1,115.3 L450.7,111.3 L453.8,107.9 L450.9,108.4 L446.7,110.4 L441.8,112.1Z M474.8,117.8 L477.1,114.5 L481.4,110.8 L487.1,108.8 L492.2,115.7 L487.6,119.0 L487.9,124.1 L491.6,128.0 L492.2,131.8 L495.0,133.3 L493.3,138.9 L495.3,140.7 L495.6,145.7 L489.9,147.9 L485.1,146.1 L481.4,142.9 L481.1,137.7 L482.8,135.5 L480.2,129.5 L478.0,125.6 L477.1,122.9 L474.8,117.8Z M507.5,114.9 L511.2,112.1 L516.1,112.9 L515.5,119.0 L512.7,121.7 L509.3,121.7Z M637.0,88.2 L640.7,87.8 L647.8,82.2 L653.5,72.5 L654.0,68.5 L652.3,69.5 L645.5,79.8 L639.2,85.9Z M551.1,110.8 L555.3,110.4 L561.6,112.1 L566.7,110.4 L567.3,112.9 L561.0,114.1 L553.9,113.3Z M80.0,110.0 L86.0,110.4 L93.1,110.8 L100.2,110.0 L101.6,110.8 L100.8,105.4 L96.0,101.6 L90.3,103.3 L87.4,104.6 L80.0,110.0Z M92.0,128.7 L93.1,129.9 L95.4,129.5 L96.8,124.9 L96.5,120.2 L98.8,115.7 L100.5,113.7 L96.0,113.7 L92.5,117.8 L92.3,122.9Z M101.9,113.7 L104.8,116.2 L105.3,120.9 L107.3,124.9 L109.6,122.9 L109.9,117.8 L113.9,117.8 L113.0,113.7 L107.3,112.9 L101.9,113.7Z M104.8,129.9 L110.2,130.6 L116.4,127.2 L117.3,125.3 L113.0,126.4 L107.3,128.3Z M115.0,123.7 L120.1,123.7 L125.0,122.9 L124.7,120.2 L120.1,121.3 L116.4,122.5Z M66.1,93.7 L68.1,93.2 L67.5,85.5 L64.1,78.4 L61.0,78.8 L63.2,86.8 L65.5,91.4Z M-13.6,15.1 L-5.0,11.7 L3.5,3.3 L-2.2,1.1 L-10.7,4.7 L-15.0,8.2Z M9.2,40.2 L17.7,39.0 L27.7,31.2 L23.4,29.9 L14.9,31.8 L9.2,36.6Z M1451.3,40.2 L1455.6,44.8 L1459.3,41.4 L1457.0,36.6 L1453.0,37.2Z M1464.1,39.0 L1468.4,39.6 L1469.3,31.2 L1467.0,29.9 L1463.6,33.0Z M1401.6,52.7 L1405.8,53.2 L1405.3,49.9 L1402.4,49.4Z M1095.8,48.8 L1097.2,54.9 L1102.9,62.3 L1110.0,62.3 L1115.7,65.9 L1124.2,71.0 L1131.6,72.5 L1132.2,82.2 L1137.0,89.1 L1140.7,89.1 L1141.6,79.8 L1147.0,70.0 L1147.5,59.7 L1144.7,48.8 L1144.1,32.4 L1139.9,24.9 L1131.3,18.4 L1124.2,23.0 L1115.7,23.6 L1107.2,30.6 L1099.2,40.8 L1095.8,48.8Z M1121.4,21.7 L1127.1,11.7 L1131.3,4.7 L1133.6,-6.3 L1132.8,-18.1 L1141.3,-26.4 L1155.5,-14.1 L1159.8,-2.6 L1156.9,6.1 L1145.6,12.4 L1138.4,20.4Z M1445.4,129.1 L1445.9,124.1 L1447.9,119.0 L1450.8,116.2 L1453.6,110.8 L1457.0,112.5 L1461.3,114.5 L1458.7,115.7 L1460.7,119.0 L1464.1,118.6 L1467.3,116.6 L1470.1,115.7 L1472.7,117.8 L1474.9,119.8 L1478.9,122.5 L1483.8,128.0 L1484.0,130.6 L1479.8,132.5 L1475.5,132.9 L1470.7,131.4 L1467.0,129.9 L1462.7,128.7 L1458.4,129.5 L1454.7,132.1 L1448.8,131.8 L1445.4,129.1Z M1465.0,114.1 L1467.0,115.7 L1470.1,115.3 L1474.7,111.3 L1477.8,107.9 L1474.9,108.4 L1470.7,110.4 L1465.8,112.1Z M1498.8,117.8 L1501.1,114.5 L1505.4,110.8 L1511.1,108.8 L1516.2,115.7 L1511.6,119.0 L1511.9,124.1 L1515.6,128.0 L1516.2,131.8 L1519.0,133.3 L1517.3,138.9 L1519.3,140.7 L1519.6,145.7 L1513.9,147.9 L1509.1,146.1 L1505.4,142.9 L1505.1,137.7 L1506.8,135.5 L1504.2,129.5 L1502.0,125.6 L1501.1,122.9 L1498.8,117.8Z M1531.5,114.9 L1535.2,112.1 L1540.1,112.9 L1539.5,119.0 L1536.7,121.7 L1533.3,121.7Z M1661.0,88.2 L1664.7,87.8 L1671.8,82.2 L1677.5,72.5 L1678.0,68.5 L1676.3,69.5 L1669.5,79.8 L1663.2,85.9Z M1575.1,110.8 L1579.3,110.4 L1585.6,112.1 L1590.7,110.4 L1591.3,112.9 L1585.0,114.1 L1577.9,113.3Z M1104.0,110.0 L1110.0,110.4 L1117.1,110.8 L1124.2,110.0 L1125.6,110.8 L1124.8,105.4 L1120.0,101.6 L1114.3,103.3 L1111.4,104.6 L1104.0,110.0Z M1116.0,128.7 L1117.1,129.9 L1119.4,129.5 L1120.8,124.9 L1120.5,120.2 L1122.8,115.7 L1124.5,113.7 L1120.0,113.7 L1116.5,117.8 L1116.3,122.9Z M1125.9,113.7 L1128.8,116.2 L1129.3,120.9 L1131.3,124.9 L1133.6,122.9 L1133.9,117.8 L1137.9,117.8 L1137.0,113.7 L1131.3,112.9 L1125.9,113.7Z M1128.8,129.9 L1134.2,130.6 L1140.4,127.2 L1141.3,125.3 L1137.0,126.4 L1131.3,128.3Z M1139.0,123.7 L1144.1,123.7 L1149.0,122.9 L1148.7,120.2 L1144.1,121.3 L1140.4,122.5Z M1090.1,93.7 L1092.1,93.2 L1091.5,85.5 L1088.1,78.4 L1085.0,78.8 L1087.2,86.8 L1089.5,91.4Z M1010.4,15.1 L1019.0,11.7 L1027.5,3.3 L1021.8,1.1 L1013.3,4.7 L1009.0,8.2Z M1033.2,40.2 L1041.7,39.0 L1051.7,31.2 L1047.4,29.9 L1038.9,31.8 L1033.2,36.6Z" fill="#d5dde6"/><path d="M-889.6,-106.5 L-869.7,-81.2 L-847.0,-75.4 L-841.3,-49.2 L-837.0,-26.4 L-829.9,-10.2 L-832.8,6.8 L-828.5,18.4 L-824.2,29.9 L-820.0,39.0 L-812.8,43.1 L-807.2,47.1 L-802.9,42.5 L-800.0,32.4 L-795.8,18.4 L-788.7,11.0 L-778.7,2.5 L-770.2,-7.9 L-753.1,-19.8 L-744.6,-35.2 L-736.0,-59.2 L-733.2,-93.4 L-738.9,-153.7 L-795.8,-194.8 L-852.7,-173.0 L-889.6,-106.5Z M-750.8,11.7 L-744.6,5.4 L-734.6,6.8 L-724.7,4.7 L-720.7,13.1 L-723.2,19.1 L-733.2,25.5 L-741.7,23.0 L-746.6,22.3 L-744.0,17.1 L-750.8,11.7Z M-698.2,95.4 L-690.5,93.2 L-678.3,90.5 L-677.2,83.6 L-681.4,79.8 L-682.9,75.0 L-686.6,69.5 L-688.0,66.4 L-687.1,59.2 L-692.0,58.6 L-691.1,53.8 L-696.2,53.8 L-698.2,60.7 L-699.6,65.9 L-697.6,71.0 L-695.9,73.5 L-691.4,73.5 L-690.5,80.3 L-695.4,80.7 L-693.9,85.5 L-696.8,87.8 L-691.1,89.6 L-694.8,91.0 L-698.2,95.4Z M-699.1,85.9 L-699.1,77.9 L-697.9,74.5 L-699.9,71.5 L-703.0,71.0 L-706.2,75.0 L-710.4,76.4 L-710.2,82.2 L-711.3,87.8 L-706.2,88.7 L-699.1,85.9Z M-856.9,4.7 L-859.8,8.2 L-862.6,18.4 L-865.5,26.8 L-866.9,34.8 L-871.2,36.0 L-876.8,33.0 L-885.4,28.7 L-892.5,21.7 L-901.0,19.7 L-903.9,17.1 L-902.4,11.7 L-892.5,6.1 L-889.6,-10.2 L-903.9,-22.2 L-932.3,-44.4 L-909.6,-59.2 L-881.1,-30.8 L-869.7,-14.1 L-856.9,4.7Z M-929.5,24.3 L-918.1,31.2 L-910.1,23.6 L-915.2,16.4 L-925.2,8.2 L-929.5,18.4Z M-923.5,196.7 L-918.1,194.0 L-913.8,192.7 L-909.6,193.3 L-903.3,197.0 L-897.3,199.5 L-893.1,201.6 L-896.8,202.8 L-902.4,202.8 L-905.3,198.0 L-912.4,197.3 L-915.8,195.2 L-920.9,196.7Z M-893.6,203.1 L-888.2,202.8 L-881.1,203.7 L-876.6,206.7 L-881.1,207.9 L-885.4,209.7 L-888.2,207.9 L-893.6,207.3 L-889.6,206.1Z M-904.7,207.3 L-899.0,207.9 L-900.5,208.8 L-904.4,207.9Z M-873.1,207.0 L-868.6,207.3 L-869.2,208.5 L-872.9,208.5Z M-850.7,106.3 L-841.3,98.1 L-839.9,89.1 L-834.2,100.3 L-831.6,106.7 L-834.2,110.0 L-839.9,108.8 L-844.1,106.3Z M-1047.2,92.3 L-1037.6,95.9 L-1032.7,102.9 L-1037.6,101.1 L-1044.7,95.9Z M-1121.5,62.8 L-1115.2,58.1 L-1118.6,57.0 L-1122.0,60.7Z M-1060.3,77.4 L-1056.3,79.8 L-1056.9,85.5 L-1059.2,82.2Z M-646.7,143.2 L-643.6,142.9 L-637.6,142.5 L-639.0,148.2 L-641.3,147.2 L-646.4,145.0Z M-658.7,132.5 L-655.5,131.8 L-654.1,134.4 L-654.7,139.6 L-658.1,140.3 L-658.1,136.3Z M-657.5,126.4 L-655.3,124.9 L-655.0,128.7 L-655.8,131.0 L-657.3,129.9Z M-615.2,152.5 L-610.9,152.8 L-607.2,153.2 L-608.0,154.2 L-612.3,154.6 L-614.9,153.5Z M-590.1,154.2 L-586.7,153.2 L-583.6,151.8 L-585.3,154.2 L-585.6,155.6 L-589.3,155.2Z M-455.0,233.5 L-453.6,232.6 L-449.3,239.2 L-450.7,242.9 L-454.2,243.5 L-455.0,237.8Z M-373.1,205.2 L-370.5,202.5 L-367.4,202.2 L-366.3,203.4 L-367.7,206.7 L-370.5,207.9Z M-340.4,193.3 L-339.2,196.4 L-337.8,196.4 L-336.1,191.8 L-335.3,187.1 L-336.7,186.2 L-339.0,188.7Z M-341.2,213.9 L-339.0,207.0 L-336.4,206.7 L-334.4,207.0 L-333.6,211.5 L-336.1,215.1 L-335.0,220.4 L-329.9,221.3 L-329.3,224.8 L-338.4,221.0 L-339.2,218.9Z M-313.4,159.7 L-310.8,158.0 L-307.7,159.4 L-306.5,161.7 L-308.5,166.4 L-310.5,167.8 L-311.7,166.4 L-312.2,163.1Z M-305.4,161.1 L-303.7,157.7 L-300.0,156.6 L-298.6,158.3 L-300.3,160.4 L-303.4,161.7Z M-309.7,157.7 L-307.1,155.2 L-303.7,152.5 L-299.4,152.1 L-295.7,151.8 L-292.6,146.8 L-290.9,145.4 L-287.2,143.9 L-284.6,140.3 L-283.8,135.5 L-284.1,132.9 L-282.6,131.4 L-279.5,131.4 L-279.5,135.1 L-278.4,138.5 L-280.6,142.5 L-280.9,146.5 L-281.8,150.7 L-281.5,153.2 L-284.1,154.6 L-286.1,153.5 L-287.5,155.6 L-291.5,155.6 L-292.9,156.6 L-295.2,159.4 L-297.4,158.3 L-298.3,155.6 L-302.3,156.3 L-305.7,157.0 L-309.4,158.0Z M-283.8,130.6 L-284.3,126.4 L-282.4,123.7 L-279.8,123.7 L-278.9,115.3 L-275.8,118.2 L-271.5,120.6 L-268.7,119.8 L-267.6,123.7 L-272.7,125.3 L-274.4,128.7 L-280.1,126.4 L-281.2,129.9Z M-278.1,112.9 L-276.4,111.3 L-273.8,111.7 L-275.2,102.4 L-271.0,100.3 L-274.4,93.7 L-274.7,84.5 L-275.0,76.4 L-277.2,75.9 L-276.4,82.2 L-278.4,89.1 L-277.8,100.7 L-278.4,107.9Z M134.4,-106.5 L154.3,-81.2 L177.0,-75.4 L182.7,-49.2 L187.0,-26.4 L194.1,-10.2 L191.2,6.8 L195.5,18.4 L199.8,29.9 L204.0,39.0 L211.2,43.1 L216.8,47.1 L221.1,42.5 L224.0,32.4 L228.2,18.4 L235.3,11.0 L245.3,2.5 L253.8,-7.9 L270.9,-19.8 L279.4,-35.2 L288.0,-59.2 L290.8,-93.4 L285.1,-153.7 L228.2,-194.8 L171.3,-173.0 L134.4,-106.5Z M273.2,11.7 L279.4,5.4 L289.4,6.8 L299.3,4.7 L303.3,13.1 L300.8,19.1 L290.8,25.5 L282.3,23.0 L277.4,22.3 L280.0,17.1 L273.2,11.7Z M325.8,95.4 L333.5,93.2 L345.7,90.5 L346.8,83.6 L342.6,79.8 L341.1,75.0 L337.4,69.5 L336.0,66.4 L336.9,59.2 L332.0,58.6 L332.9,53.8 L327.8,53.8 L325.8,60.7 L324.4,65.9 L326.4,71.0 L328.1,73.5 L332.6,73.5 L333.5,80.3 L328.6,80.7 L330.1,85.5 L327.2,87.8 L332.9,89.6 L329.2,91.0 L325.8,95.4Z M324.9,85.9 L324.9,77.9 L326.1,74.5 L324.1,71.5 L321.0,71.0 L317.8,75.0 L313.6,76.4 L313.8,82.2 L312.7,87.8 L317.8,88.7 L324.9,85.9Z M167.1,4.7 L164.2,8.2 L161.4,18.4 L158.5,26.8 L157.1,34.8 L152.8,36.0 L147.2,33.0 L138.6,28.7 L131.5,21.7 L123.0,19.7 L120.1,17.1 L121.6,11.7 L131.5,6.1 L134.4,-10.2 L120.1,-22.2 L91.7,-44.4 L114.4,-59.2 L142.9,-30.8 L154.3,-14.1 L167.1,4.7Z M94.5,24.3 L105.9,31.2 L113.9,23.6 L108.8,16.4 L98.8,8.2 L94.5,18.4Z M100.5,196.7 L105.9,194.0 L110.2,192.7 L114.4,193.3 L120.7,197.0 L126.7,199.5 L130.9,201.6 L127.2,202.8 L121.6,202.8 L118.7,198.0 L111.6,197.3 L108.2,195.2 L103.1,196.7Z M130.4,203.1 L135.8,202.8 L142.9,203.7 L147.4,206.7 L142.9,207.9 L138.6,209.7 L135.8,207.9 L130.4,207.3 L134.4,206.1Z M119.3,207.3 L125.0,207.9 L123.5,208.8 L119.6,207.9Z M150.9,207.0 L155.4,207.3 L154.8,208.5 L151.1,208.5Z M173.3,106.3 L182.7,98.1 L184.1,89.1 L189.8,100.3 L192.4,106.7 L189.8,110.0 L184.1,108.8 L179.9,106.3Z M-23.2,92.3 L-13.6,95.9 L-8.7,102.9 L-13.6,101.1 L-20.7,95.9Z M-97.5,62.8 L-91.2,58.1 L-94.6,57.0 L-98.0,60.7Z M-36.3,77.4 L-32.3,79.8 L-32.9,85.5 L-35.2,82.2Z M377.3,143.2 L380.4,142.9 L386.4,142.5 L385.0,148.2 L382.7,147.2 L377.6,145.0Z M365.3,132.5 L368.5,131.8 L369.9,134.4 L369.3,139.6 L365.9,140.3 L365.9,136.3Z M366.5,126.4 L368.7,124.9 L369.0,128.7 L368.2,131.0 L366.7,129.9Z M408.8,152.5 L413.1,152.8 L416.8,153.2 L416.0,154.2 L411.7,154.6 L409.1,153.5Z M433.9,154.2 L437.3,153.2 L440.4,151.8 L438.7,154.2 L438.4,155.6 L434.7,155.2Z M569.0,233.5 L570.4,232.6 L574.7,239.2 L573.3,242.9 L569.8,243.5 L569.0,237.8Z M650.9,205.2 L653.5,202.5 L656.6,202.2 L657.7,203.4 L656.3,206.7 L653.5,207.9Z M683.6,193.3 L684.8,196.4 L686.2,196.4 L687.9,191.8 L688.7,187.1 L687.3,186.2 L685.0,188.7Z M682.8,213.9 L685.0,207.0 L687.6,206.7 L689.6,207.0 L690.4,211.5 L687.9,215.1 L689.0,220.4 L694.1,221.3 L694.7,224.8 L685.6,221.0 L684.8,218.9Z M710.6,159.7 L713.2,158.0 L716.3,159.4 L717.5,161.7 L715.5,166.4 L713.5,167.8 L712.3,166.4 L711.8,163.1Z M718.6,161.1 L720.3,157.7 L724.0,156.6 L725.4,158.3 L723.7,160.4 L720.6,161.7Z M714.3,157.7 L716.9,155.2 L720.3,152.5 L724.6,152.1 L728.3,151.8 L731.4,146.8 L733.1,145.4 L736.8,143.9 L739.4,140.3 L740.2,135.5 L739.9,132.9 L741.4,131.4 L744.5,131.4 L744.5,135.1 L745.6,138.5 L743.4,142.5 L743.1,146.5 L742.2,150.7 L742.5,153.2 L739.9,154.6 L737.9,153.5 L736.5,155.6 L732.5,155.6 L731.1,156.6 L728.8,159.4 L726.6,158.3 L725.7,155.6 L721.7,156.3 L718.3,157.0 L714.6,158.0Z M740.2,130.6 L739.7,126.4 L741.6,123.7 L744.2,123.7 L745.1,115.3 L748.2,118.2 L752.5,120.6 L755.3,119.8 L756.4,123.7 L751.3,125.3 L749.6,128.7 L743.9,126.4 L742.8,129.9Z M745.9,112.9 L747.6,111.3 L750.2,111.7 L748.8,102.4 L753.0,100.3 L749.6,93.7 L749.3,84.5 L749.0,76.4 L746.8,75.9 L747.6,82.2 L745.6,89.1 L746.2,100.7 L745.6,107.9Z M1158.4,-106.5 L1178.3,-81.2 L1201.0,-75.4 L1206.7,-49.2 L1211.0,-26.4 L1218.1,-10.2 L1215.2,6.8 L1219.5,18.4 L1223.8,29.9 L1228.0,39.0 L1235.2,43.1 L1240.8,47.1 L1245.1,42.5 L1248.0,32.4 L1252.2,18.4 L1259.3,11.0 L1269.3,2.5 L1277.8,-7.9 L1294.9,-19.8 L1303.4,-35.2 L1312.0,-59.2 L1314.8,-93.4 L1309.1,-153.7 L1252.2,-194.8 L1195.3,-173.0 L1158.4,-106.5Z M1297.2,11.7 L1303.4,5.4 L1313.4,6.8 L1323.3,4.7 L1327.3,13.1 L1324.8,19.1 L1314.8,25.5 L1306.3,23.0 L1301.4,22.3 L1304.0,17.1 L1297.2,11.7Z M1349.8,95.4 L1357.5,93.2 L1369.7,90.5 L1370.8,83.6 L1366.6,79.8 L1365.1,75.0 L1361.4,69.5 L1360.0,66.4 L1360.9,59.2 L1356.0,58.6 L1356.9,53.8 L1351.8,53.8 L1349.8,60.7 L1348.4,65.9 L1350.4,71.0 L1352.1,73.5 L1356.6,73.5 L1357.5,80.3 L1352.6,80.7 L1354.1,85.5 L1351.2,87.8 L1356.9,89.6 L1353.2,91.0 L1349.8,95.4Z M1348.9,85.9 L1348.9,77.9 L1350.1,74.5 L1348.1,71.5 L1345.0,71.0 L1341.8,75.0 L1337.6,76.4 L1337.8,82.2 L1336.7,87.8 L1341.8,88.7 L1348.9,85.9Z M1191.1,4.7 L1188.2,8.2 L1185.4,18.4 L1182.5,26.8 L1181.1,34.8 L1176.8,36.0 L1171.2,33.0 L1162.6,28.7 L1155.5,21.7 L1147.0,19.7 L1144.1,17.1 L1145.6,11.7 L1155.5,6.1 L1158.4,-10.2 L1144.1,-22.2 L1115.7,-44.4 L1138.4,-59.2 L1166.9,-30.8 L1178.3,-14.1 L1191.1,4.7Z M1118.5,24.3 L1129.9,31.2 L1137.9,23.6 L1132.8,16.4 L1122.8,8.2 L1118.5,18.4Z M1124.5,196.7 L1129.9,194.0 L1134.2,192.7 L1138.4,193.3 L1144.7,197.0 L1150.7,199.5 L1154.9,201.6 L1151.2,202.8 L1145.6,202.8 L1142.7,198.0 L1135.6,197.3 L1132.2,195.2 L1127.1,196.7Z M1154.4,203.1 L1159.8,202.8 L1166.9,203.7 L1171.4,206.7 L1166.9,207.9 L1162.6,209.7 L1159.8,207.9 L1154.4,207.3 L1158.4,206.1Z M1143.3,207.3 L1149.0,207.9 L1147.5,208.8 L1143.6,207.9Z M1174.9,207.0 L1179.4,207.3 L1178.8,208.5 L1175.1,208.5Z M1197.3,106.3 L1206.7,98.1 L1208.1,89.1 L1213.8,100.3 L1216.4,106.7 L1213.8,110.0 L1208.1,108.8 L1203.9,106.3Z M1000.8,92.3 L1010.4,95.9 L1015.3,102.9 L1010.4,101.1 L1003.3,95.9Z M926.5,62.8 L932.8,58.1 L929.4,57.0 L926.0,60.7Z M987.7,77.4 L991.7,79.8 L991.1,85.5 L988.8,82.2Z M1401.3,143.2 L1404.4,142.9 L1410.4,142.5 L1409.0,148.2 L1406.7,147.2 L1401.6,145.0Z M1389.3,132.5 L1392.5,131.8 L1393.9,134.4 L1393.3,139.6 L1389.9,140.3 L1389.9,136.3Z M1390.5,126.4 L1392.7,124.9 L1393.0,128.7 L1392.2,131.0 L1390.7,129.9Z M1432.8,152.5 L1437.1,152.8 L1440.8,153.2 L1440.0,154.2 L1435.7,154.6 L1433.1,153.5Z M1457.9,154.2 L1461.3,153.2 L1464.4,151.8 L1462.7,154.2 L1462.4,155.6 L1458.7,155.2Z M1593.0,233.5 L1594.4,232.6 L1598.7,239.2 L1597.3,242.9 L1593.8,243.5 L1593.0,237.8Z M1674.9,205.2 L1677.5,202.5 L1680.6,202.2 L1681.7,203.4 L1680.3,206.7 L1677.5,207.9Z M1707.6,193.3 L1708.8,196.4 L1710.2,196.4 L1711.9,191.8 L1712.7,187.1 L1711.3,186.2 L1709.0,188.7Z M1706.8,213.9 L1709.0,207.0 L1711.6,206.7 L1713.6,207.0 L1714.4,211.5 L1711.9,215.1 L1713.0,220.4 L1718.1,221.3 L1718.7,224.8 L1709.6,221.0 L1708.8,218.9Z M1734.6,159.7 L1737.2,158.0 L1740.3,159.4 L1741.5,161.7 L1739.5,166.4 L1737.5,167.8 L1736.3,166.4 L1735.8,163.1Z M1742.6,161.1 L1744.3,157.7 L1748.0,156.6 L1749.4,158.3 L1747.7,160.4 L1744.6,161.7Z M1738.3,157.7 L1740.9,155.2 L1744.3,152.5 L1748.6,152.1 L1752.3,151.8 L1755.4,146.8 L1757.1,145.4 L1760.8,143.9 L1763.4,140.3 L1764.2,135.5 L1763.9,132.9 L1765.4,131.4 L1768.5,131.4 L1768.5,135.1 L1769.6,138.5 L1767.4,142.5 L1767.1,146.5 L1766.2,150.7 L1766.5,153.2 L1763.9,154.6 L1761.9,153.5 L1760.5,155.6 L1756.5,155.6 L1755.1,156.6 L1752.8,159.4 L1750.6,158.3 L1749.7,155.6 L1745.7,156.3 L1742.3,157.0 L1738.6,158.0Z M1764.2,130.6 L1763.7,126.4 L1765.6,123.7 L1768.2,123.7 L1769.1,115.3 L1772.2,118.2 L1776.5,120.6 L1779.3,119.8 L1780.4,123.7 L1775.3,125.3 L1773.6,128.7 L1767.9,126.4 L1766.8,129.9Z M1769.9,112.9 L1771.6,111.3 L1774.2,111.7 L1772.8,102.4 L1777.0,100.3 L1773.6,93.7 L1773.3,84.5 L1773.0,76.4 L1770.8,75.9 L1771.6,82.2 L1769.6,89.1 L1770.2,100.7 L1769.6,107.9Z" fill="#f9faf7"/><path d="M-1032.7,100.3 L-952.8,100.3 L-952.8,98.5 L-936.9,104.6 L-922.4,110.8 L-916.7,115.7 L-916.4,124.9 L-906.7,124.1 L-899.6,120.9 L-894.5,117.0 L-884.0,115.7 L-878.8,107.1 L-874.9,108.4 L-874.9,114.1 L-872.6,117.8 M-1083.1,-18.9 L-1083.1,44.3 L-1077.4,46.0 L-1073.1,51.6 L-1067.4,47.7 L-1061.4,54.9 L-1054.6,67.5 L-1051.8,71.0 M-1015.1,162.8 L-1008.3,162.1 L-997.7,166.8 L-989.8,166.8 L-984.9,165.1 L-979.2,172.4 L-975.0,174.3 L-970.4,171.7 L-965.0,179.2 L-958.5,184.3 M-944.3,218.9 L-943.7,209.1 L-940.8,209.1 L-940.8,210.6 L-935.7,209.1 L-933.2,207.0 M-687.1,123.7 L-672.9,127.2 M-701.9,128.7 L-700.5,130.6 L-701.9,138.1 L-702.8,141.8 L-703.0,146.5 M-674.9,91.0 L-670.1,96.3 L-664.1,98.1 L-658.7,100.3 L-660.4,106.3 L-664.9,112.1 L-662.1,113.3 L-660.7,121.7 M-664.6,79.8 L-662.1,85.9 L-664.9,92.3 L-664.1,98.1 M-657.8,73.0 L-655.0,73.5 M-641.6,77.9 L-640.5,84.5 L-639.3,91.4 L-647.9,94.6 L-642.7,101.1 L-645.0,106.7 L-653.6,106.7 L-660.4,106.3 M-639.3,91.4 L-628.5,98.1 L-618.0,99.8 L-613.7,93.7 L-615.2,86.8 L-615.2,77.4 L-617.1,75.4 L-626.5,75.4 M-642.7,101.1 L-633.6,101.1 L-628.5,98.1 M-633.6,104.6 L-635.1,110.8 L-643.0,110.8 L-646.4,106.7 M-635.1,110.8 L-628.5,113.3 L-619.4,102.9 L-618.0,99.8 M-643.3,114.9 L-637.9,113.7 L-635.1,110.8 M-628.5,113.3 L-624.3,112.5 L-620.8,117.0 L-617.4,119.0 L-610.9,122.1 L-600.9,122.1 M-619.4,102.9 L-606.6,103.3 L-600.9,114.9 L-601.8,121.7 M-617.4,119.0 L-618.0,127.6 L-616.9,131.4 L-608.0,129.9 L-602.4,129.1 M-626.5,129.5 L-623.7,126.8 L-618.0,127.6 M-626.5,129.5 L-622.3,134.0 L-623.7,137.0 M-637.9,113.7 L-632.2,117.0 L-628.0,117.8 L-626.5,122.9 L-629.4,126.8 M-615.2,77.4 L-609.5,75.9 L-606.3,69.0 L-602.4,67.5 L-591.5,86.4 L-606.3,89.1 L-613.7,93.7 M-622.3,67.5 L-606.3,69.0 M-620.8,59.7 L-603.8,59.7 L-602.4,49.4 M-602.4,67.5 L-603.8,59.7 M-591.5,86.4 L-582.4,85.5 L-568.2,98.1 L-573.1,108.4 M-606.3,103.3 L-598.1,104.6 L-595.2,110.8 M-602.4,48.8 L-602.4,43.1 L-596.7,34.2 L-598.1,1.1 L-600.9,-10.2 L-602.4,-22.2 M-647.9,52.1 L-647.9,37.2 L-645.0,21.7 L-639.3,8.2 L-630.8,-10.2 L-623.7,-14.1 L-610.9,-23.9 L-602.4,-22.2 M-613.7,9.6 L-615.2,-2.6 L-623.7,-14.1 M-564.0,130.6 L-558.3,132.5 L-555.4,138.1 L-556.8,146.1 M-579.6,147.9 L-562.5,146.8 L-555.4,146.8 M-556.8,146.1 L-551.2,154.2 L-551.2,161.1 L-545.5,171.1 M-571.1,163.8 L-562.5,167.8 L-549.7,174.0 L-545.5,176.0 M-581.0,161.1 L-571.1,163.8 L-561.7,146.8 M-560.3,213.0 L-548.3,211.5 L-534.1,205.5 L-525.6,194.9 L-522.7,188.7 M-537.5,187.7 L-535.2,189.6 L-532.7,194.9 L-523.8,195.2 M-610.9,166.1 L-610.9,196.4 M-610.9,196.4 L-576.8,196.4 M-649.3,160.7 L-653.6,171.1 L-653.6,188.7 L-647.9,191.8 M-686.8,154.2 L-686.8,162.8 L-693.4,169.4 L-706.7,175.6 L-706.7,179.8 M-695.7,187.1 L-678.6,199.5 L-670.6,204.6 L-665.5,204.0 L-647.9,191.8 M-730.4,198.6 L-719.0,198.6 L-719.0,193.3 L-706.7,179.8 M-716.1,218.0 L-714.7,216.0 L-697.6,216.0 L-697.6,213.0 L-699.1,187.4 L-695.7,187.1 L-706.7,179.8 M-637.9,193.3 L-637.9,202.5 L-643.6,220.4 M-613.7,204.0 L-613.7,215.4 L-619.4,223.3 M-647.9,191.8 L-637.9,193.3 L-613.7,204.0 L-610.9,202.5 L-610.9,196.4 M-586.7,196.4 L-583.9,211.5 L-578.2,219.5 L-572.5,209.1 M-729.8,225.1 L-721.0,224.8 L-714.7,225.1 L-716.1,218.0 L-728.9,213.9 M-670.6,204.6 L-672.0,216.0 L-682.0,217.7 L-687.7,217.4 L-697.6,216.0 M-546.9,112.9 L-542.6,104.6 L-549.7,100.3 L-545.5,93.7 L-531.2,89.1 L-517.0,92.3 L-508.5,91.4 L-508.5,77.4 L-497.1,74.5 L-482.9,71.5 L-471.5,77.4 L-464.4,76.4 L-457.3,91.4 L-445.9,91.4 L-438.8,98.1 L-433.1,99.4 M-432.3,99.8 L-426.0,93.7 L-420.3,93.2 L-403.2,86.8 L-391.9,89.1 L-379.1,94.6 L-372.0,99.0 L-357.7,95.0 L-350.1,96.8 L-353.5,104.6 L-341.2,108.8 L-348.1,110.4 L-359.2,117.8 L-364.8,122.9 L-374.8,126.8 L-384.8,129.5 L-397.6,126.4 L-408.9,124.9 L-410.9,119.8 L-424.6,114.9 L-423.2,108.8 L-431.7,102.4 L-432.3,99.8 M-350.1,96.8 L-340.7,84.5 L-326.4,82.2 L-319.3,95.9 L-309.4,105.8 L-299.4,103.3 L-303.7,117.0 L-309.4,124.9 L-310.5,127.2 M-328.4,136.6 L-323.6,132.5 L-317.3,130.6 L-313.6,127.2 L-310.5,127.2 M-322.2,144.3 L-316.5,142.1 M-524.1,117.0 L-522.7,131.4 L-515.6,126.8 L-508.5,119.4 L-498.5,122.9 L-494.3,124.9 L-488.6,132.5 L-480.0,126.8 L-472.9,124.9 L-454.4,124.9 L-453.0,117.0 L-447.3,114.9 L-446.5,108.8 L-438.8,108.8 L-438.8,98.1 M-454.4,124.9 L-465.8,134.8 L-472.4,138.1 L-468.7,146.1 L-460.7,152.5 L-457.3,156.6 L-458.7,162.8 L-455.9,168.1 L-451.6,170.4 L-445.9,173.4 L-431.7,177.9 L-428.8,177.6 L-420.3,178.2 L-406.1,176.9 L-401.8,185.5 L-404.4,190.2 L-397.6,198.0 L-393.3,195.5 L-390.4,194.3 L-379.1,195.2 L-374.8,198.0 M-470.1,155.9 L-468.7,162.8 L-471.5,169.4 L-478.6,178.2 L-482.9,182.4 L-480.0,188.7 L-487.2,190.9 M-528.7,146.1 L-519.9,142.9 L-508.5,148.6 L-508.5,155.9 L-509.9,162.8 L-508.5,166.4 L-502.8,172.7 L-507.1,186.5 M-478.6,147.2 L-480.0,157.7 L-485.2,167.1 L-492.8,171.4 L-502.8,172.7 M-522.7,131.4 L-511.3,136.3 L-504.2,140.0 L-495.7,145.4 L-489.1,146.5 L-478.6,144.3 L-469.0,146.5 M-488.6,132.5 L-485.7,138.1 L-478.6,138.1 L-472.4,138.1 M-454.4,169.4 L-451.6,176.0 L-443.1,179.2 L-431.1,182.4 L-431.7,177.9 M-431.1,182.4 L-427.4,184.0 L-420.3,187.1 L-418.9,196.4 M-428.8,196.4 L-429.4,189.6 L-431.1,182.4 M-418.9,196.4 L-416.0,188.7 L-413.2,185.5 L-406.1,176.9 M-397.6,198.0 L-394.7,204.0 L-403.2,213.0 M-390.4,194.3 L-386.2,208.5 L-380.5,214.5 L-376.2,218.9 M-396.1,221.8 L-389.0,219.5 L-381.9,219.5 L-376.2,218.9 M-554.6,137.4 L-549.7,132.5 L-544.0,129.5 M-551.2,140.3 L-545.5,141.8 M-8.7,100.3 L71.2,100.3 L71.2,98.5 L87.1,104.6 L101.6,110.8 L107.3,115.7 L107.6,124.9 L117.3,124.1 L124.4,120.9 L129.5,117.0 L140.0,115.7 L145.2,107.1 L149.1,108.4 L149.1,114.1 L151.4,117.8 M-59.1,-18.9 L-59.1,44.3 L-53.4,46.0 L-49.1,51.6 L-43.4,47.7 L-37.4,54.9 L-30.6,67.5 L-27.8,71.0 M8.9,162.8 L15.7,162.1 L26.3,166.8 L34.2,166.8 L39.1,165.1 L44.8,172.4 L49.0,174.3 L53.6,171.7 L59.0,179.2 L65.5,184.3 M79.7,218.9 L80.3,209.1 L83.2,209.1 L83.2,210.6 L88.3,209.1 L90.8,207.0 M336.9,123.7 L351.1,127.2 M322.1,128.7 L323.5,130.6 L322.1,138.1 L321.2,141.8 L321.0,146.5 M349.1,91.0 L353.9,96.3 L359.9,98.1 L365.3,100.3 L363.6,106.3 L359.1,112.1 L361.9,113.3 L363.3,121.7 M359.4,79.8 L361.9,85.9 L359.1,92.3 L359.9,98.1 M366.2,73.0 L369.0,73.5 M382.4,77.9 L383.5,84.5 L384.7,91.4 L376.1,94.6 L381.3,101.1 L379.0,106.7 L370.4,106.7 L363.6,106.3 M384.7,91.4 L395.5,98.1 L406.0,99.8 L410.3,93.7 L408.8,86.8 L408.8,77.4 L406.9,75.4 L397.5,75.4 M381.3,101.1 L390.4,101.1 L395.5,98.1 M390.4,104.6 L388.9,110.8 L381.0,110.8 L377.6,106.7 M388.9,110.8 L395.5,113.3 L404.6,102.9 L406.0,99.8 M380.7,114.9 L386.1,113.7 L388.9,110.8 M395.5,113.3 L399.7,112.5 L403.2,117.0 L406.6,119.0 L413.1,122.1 L423.1,122.1 M404.6,102.9 L417.4,103.3 L423.1,114.9 L422.2,121.7 M406.6,119.0 L406.0,127.6 L407.1,131.4 L416.0,129.9 L421.6,129.1 M397.5,129.5 L400.3,126.8 L406.0,127.6 M397.5,129.5 L401.7,134.0 L400.3,137.0 M386.1,113.7 L391.8,117.0 L396.0,117.8 L397.5,122.9 L394.6,126.8 M408.8,77.4 L414.5,75.9 L417.7,69.0 L421.6,67.5 L432.5,86.4 L417.7,89.1 L410.3,93.7 M401.7,67.5 L417.7,69.0 M403.2,59.7 L420.2,59.7 L421.6,49.4 M421.6,67.5 L420.2,59.7 M432.5,86.4 L441.6,85.5 L455.8,98.1 L450.9,108.4 M417.7,103.3 L425.9,104.6 L428.8,110.8 M421.6,48.8 L421.6,43.1 L427.3,34.2 L425.9,1.1 L423.1,-10.2 L421.6,-22.2 M376.1,52.1 L376.1,37.2 L379.0,21.7 L384.7,8.2 L393.2,-10.2 L400.3,-14.1 L413.1,-23.9 L421.6,-22.2 M410.3,9.6 L408.8,-2.6 L400.3,-14.1 M460.0,130.6 L465.7,132.5 L468.6,138.1 L467.2,146.1 M444.4,147.9 L461.5,146.8 L468.6,146.8 M467.2,146.1 L472.8,154.2 L472.8,161.1 L478.5,171.1 M452.9,163.8 L461.5,167.8 L474.3,174.0 L478.5,176.0 M443.0,161.1 L452.9,163.8 L462.3,146.8 M463.7,213.0 L475.7,211.5 L489.9,205.5 L498.4,194.9 L501.3,188.7 M486.5,187.7 L488.8,189.6 L491.3,194.9 L500.2,195.2 M413.1,166.1 L413.1,196.4 M413.1,196.4 L447.2,196.4 M374.7,160.7 L370.4,171.1 L370.4,188.7 L376.1,191.8 M337.2,154.2 L337.2,162.8 L330.6,169.4 L317.3,175.6 L317.3,179.8 M328.3,187.1 L345.4,199.5 L353.4,204.6 L358.5,204.0 L376.1,191.8 M293.6,198.6 L305.0,198.6 L305.0,193.3 L317.3,179.8 M307.9,218.0 L309.3,216.0 L326.4,216.0 L326.4,213.0 L324.9,187.4 L328.3,187.1 L317.3,179.8 M386.1,193.3 L386.1,202.5 L380.4,220.4 M410.3,204.0 L410.3,215.4 L404.6,223.3 M376.1,191.8 L386.1,193.3 L410.3,204.0 L413.1,202.5 L413.1,196.4 M437.3,196.4 L440.1,211.5 L445.8,219.5 L451.5,209.1 M294.2,225.1 L303.0,224.8 L309.3,225.1 L307.9,218.0 L295.1,213.9 M353.4,204.6 L352.0,216.0 L342.0,217.7 L336.3,217.4 L326.4,216.0 M477.1,112.9 L481.4,104.6 L474.3,100.3 L478.5,93.7 L492.8,89.1 L507.0,92.3 L515.5,91.4 L515.5,77.4 L526.9,74.5 L541.1,71.5 L552.5,77.4 L559.6,76.4 L566.7,91.4 L578.1,91.4 L585.2,98.1 L590.9,99.4 M591.7,99.8 L598.0,93.7 L603.7,93.2 L620.8,86.8 L632.1,89.1 L644.9,94.6 L652.0,99.0 L666.3,95.0 L673.9,96.8 L670.5,104.6 L682.8,108.8 L675.9,110.4 L664.8,117.8 L659.2,122.9 L649.2,126.8 L639.2,129.5 L626.4,126.4 L615.1,124.9 L613.1,119.8 L599.4,114.9 L600.8,108.8 L592.3,102.4 L591.7,99.8 M673.9,96.8 L683.3,84.5 L697.6,82.2 L704.7,95.9 L714.6,105.8 L724.6,103.3 L720.3,117.0 L714.6,124.9 L713.5,127.2 M695.6,136.6 L700.4,132.5 L706.7,130.6 L710.4,127.2 L713.5,127.2 M701.8,144.3 L707.5,142.1 M499.9,117.0 L501.3,131.4 L508.4,126.8 L515.5,119.4 L525.5,122.9 L529.7,124.9 L535.4,132.5 L544.0,126.8 L551.1,124.9 L569.6,124.9 L571.0,117.0 L576.7,114.9 L577.5,108.8 L585.2,108.8 L585.2,98.1 M569.6,124.9 L558.2,134.8 L551.6,138.1 L555.3,146.1 L563.3,152.5 L566.7,156.6 L565.3,162.8 L568.1,168.1 L572.4,170.4 L578.1,173.4 L592.3,177.9 L595.2,177.6 L603.7,178.2 L617.9,176.9 L622.2,185.5 L619.6,190.2 L626.4,198.0 L630.7,195.5 L633.6,194.3 L644.9,195.2 L649.2,198.0 M553.9,155.9 L555.3,162.8 L552.5,169.4 L545.4,178.2 L541.1,182.4 L544.0,188.7 L536.8,190.9 M495.3,146.1 L504.1,142.9 L515.5,148.6 L515.5,155.9 L514.1,162.8 L515.5,166.4 L521.2,172.7 L516.9,186.5 M545.4,147.2 L544.0,157.7 L538.8,167.1 L531.2,171.4 L521.2,172.7 M501.3,131.4 L512.7,136.3 L519.8,140.0 L528.3,145.4 L534.9,146.5 L545.4,144.3 L555.0,146.5 M535.4,132.5 L538.3,138.1 L545.4,138.1 L551.6,138.1 M569.6,169.4 L572.4,176.0 L580.9,179.2 L592.9,182.4 L592.3,177.9 M592.9,182.4 L596.6,184.0 L603.7,187.1 L605.1,196.4 M595.2,196.4 L594.6,189.6 L592.9,182.4 M605.1,196.4 L608.0,188.7 L610.8,185.5 L617.9,176.9 M626.4,198.0 L629.3,204.0 L620.8,213.0 M633.6,194.3 L637.8,208.5 L643.5,214.5 L647.8,218.9 M627.9,221.8 L635.0,219.5 L642.1,219.5 L647.8,218.9 M469.4,137.4 L474.3,132.5 L480.0,129.5 M472.8,140.3 L478.5,141.8 M1015.3,100.3 L1095.2,100.3 L1095.2,98.5 L1111.1,104.6 L1125.6,110.8 L1131.3,115.7 L1131.6,124.9 L1141.3,124.1 L1148.4,120.9 L1153.5,117.0 L1164.0,115.7 L1169.2,107.1 L1173.1,108.4 L1173.1,114.1 L1175.4,117.8 M964.9,-18.9 L964.9,44.3 L970.6,46.0 L974.9,51.6 L980.6,47.7 L986.6,54.9 L993.4,67.5 L996.2,71.0 M1032.9,162.8 L1039.7,162.1 L1050.3,166.8 L1058.2,166.8 L1063.1,165.1 L1068.8,172.4 L1073.0,174.3 L1077.6,171.7 L1083.0,179.2 L1089.5,184.3 M1103.7,218.9 L1104.3,209.1 L1107.2,209.1 L1107.2,210.6 L1112.3,209.1 L1114.8,207.0 M1360.9,123.7 L1375.1,127.2 M1346.1,128.7 L1347.5,130.6 L1346.1,138.1 L1345.2,141.8 L1345.0,146.5 M1373.1,91.0 L1377.9,96.3 L1383.9,98.1 L1389.3,100.3 L1387.6,106.3 L1383.1,112.1 L1385.9,113.3 L1387.3,121.7 M1383.4,79.8 L1385.9,85.9 L1383.1,92.3 L1383.9,98.1 M1390.2,73.0 L1393.0,73.5 M1406.4,77.9 L1407.5,84.5 L1408.7,91.4 L1400.1,94.6 L1405.3,101.1 L1403.0,106.7 L1394.4,106.7 L1387.6,106.3 M1408.7,91.4 L1419.5,98.1 L1430.0,99.8 L1434.3,93.7 L1432.8,86.8 L1432.8,77.4 L1430.9,75.4 L1421.5,75.4 M1405.3,101.1 L1414.4,101.1 L1419.5,98.1 M1414.4,104.6 L1412.9,110.8 L1405.0,110.8 L1401.6,106.7 M1412.9,110.8 L1419.5,113.3 L1428.6,102.9 L1430.0,99.8 M1404.7,114.9 L1410.1,113.7 L1412.9,110.8 M1419.5,113.3 L1423.7,112.5 L1427.2,117.0 L1430.6,119.0 L1437.1,122.1 L1447.1,122.1 M1428.6,102.9 L1441.4,103.3 L1447.1,114.9 L1446.2,121.7 M1430.6,119.0 L1430.0,127.6 L1431.1,131.4 L1440.0,129.9 L1445.6,129.1 M1421.5,129.5 L1424.3,126.8 L1430.0,127.6 M1421.5,129.5 L1425.7,134.0 L1424.3,137.0 M1410.1,113.7 L1415.8,117.0 L1420.0,117.8 L1421.5,122.9 L1418.6,126.8 M1432.8,77.4 L1438.5,75.9 L1441.7,69.0 L1445.6,67.5 L1456.5,86.4 L1441.7,89.1 L1434.3,93.7 M1425.7,67.5 L1441.7,69.0 M1427.2,59.7 L1444.2,59.7 L1445.6,49.4 M1445.6,67.5 L1444.2,59.7 M1456.5,86.4 L1465.6,85.5 L1479.8,98.1 L1474.9,108.4 M1441.7,103.3 L1449.9,104.6 L1452.8,110.8 M1445.6,48.8 L1445.6,43.1 L1451.3,34.2 L1449.9,1.1 L1447.1,-10.2 L1445.6,-22.2 M1400.1,52.1 L1400.1,37.2 L1403.0,21.7 L1408.7,8.2 L1417.2,-10.2 L1424.3,-14.1 L1437.1,-23.9 L1445.6,-22.2 M1434.3,9.6 L1432.8,-2.6 L1424.3,-14.1 M1484.0,130.6 L1489.7,132.5 L1492.6,138.1 L1491.2,146.1 M1468.4,147.9 L1485.5,146.8 L1492.6,146.8 M1491.2,146.1 L1496.8,154.2 L1496.8,161.1 L1502.5,171.1 M1476.9,163.8 L1485.5,167.8 L1498.3,174.0 L1502.5,176.0 M1467.0,161.1 L1476.9,163.8 L1486.3,146.8 M1487.7,213.0 L1499.7,211.5 L1513.9,205.5 L1522.4,194.9 L1525.3,188.7 M1510.5,187.7 L1512.8,189.6 L1515.3,194.9 L1524.2,195.2 M1437.1,166.1 L1437.1,196.4 M1437.1,196.4 L1471.2,196.4 M1398.7,160.7 L1394.4,171.1 L1394.4,188.7 L1400.1,191.8 M1361.2,154.2 L1361.2,162.8 L1354.6,169.4 L1341.3,175.6 L1341.3,179.8 M1352.3,187.1 L1369.4,199.5 L1377.4,204.6 L1382.5,204.0 L1400.1,191.8 M1317.6,198.6 L1329.0,198.6 L1329.0,193.3 L1341.3,179.8 M1331.9,218.0 L1333.3,216.0 L1350.4,216.0 L1350.4,213.0 L1348.9,187.4 L1352.3,187.1 L1341.3,179.8 M1410.1,193.3 L1410.1,202.5 L1404.4,220.4 M1434.3,204.0 L1434.3,215.4 L1428.6,223.3 M1400.1,191.8 L1410.1,193.3 L1434.3,204.0 L1437.1,202.5 L1437.1,196.4 M1461.3,196.4 L1464.1,211.5 L1469.8,219.5 L1475.5,209.1 M1318.2,225.1 L1327.0,224.8 L1333.3,225.1 L1331.9,218.0 L1319.1,213.9 M1377.4,204.6 L1376.0,216.0 L1366.0,217.7 L1360.3,217.4 L1350.4,216.0 M1501.1,112.9 L1505.4,104.6 L1498.3,100.3 L1502.5,93.7 L1516.8,89.1 L1531.0,92.3 L1539.5,91.4 L1539.5,77.4 L1550.9,74.5 L1565.1,71.5 L1576.5,77.4 L1583.6,76.4 L1590.7,91.4 L1602.1,91.4 L1609.2,98.1 L1614.9,99.4 M1615.7,99.8 L1622.0,93.7 L1627.7,93.2 L1644.8,86.8 L1656.1,89.1 L1668.9,94.6 L1676.0,99.0 L1690.3,95.0 L1697.9,96.8 L1694.5,104.6 L1706.8,108.8 L1699.9,110.4 L1688.8,117.8 L1683.2,122.9 L1673.2,126.8 L1663.2,129.5 L1650.4,126.4 L1639.1,124.9 L1637.1,119.8 L1623.4,114.9 L1624.8,108.8 L1616.3,102.4 L1615.7,99.8 M1697.9,96.8 L1707.3,84.5 L1721.6,82.2 L1728.7,95.9 L1738.6,105.8 L1748.6,103.3 L1744.3,117.0 L1738.6,124.9 L1737.5,127.2 M1719.6,136.6 L1724.4,132.5 L1730.7,130.6 L1734.4,127.2 L1737.5,127.2 M1725.8,144.3 L1731.5,142.1 M1523.9,117.0 L1525.3,131.4 L1532.4,126.8 L1539.5,119.4 L1549.5,122.9 L1553.7,124.9 L1559.4,132.5 L1568.0,126.8 L1575.1,124.9 L1593.6,124.9 L1595.0,117.0 L1600.7,114.9 L1601.5,108.8 L1609.2,108.8 L1609.2,98.1 M1593.6,124.9 L1582.2,134.8 L1575.6,138.1 L1579.3,146.1 L1587.3,152.5 L1590.7,156.6 L1589.3,162.8 L1592.1,168.1 L1596.4,170.4 L1602.1,173.4 L1616.3,177.9 L1619.2,177.6 L1627.7,178.2 L1641.9,176.9 L1646.2,185.5 L1643.6,190.2 L1650.4,198.0 L1654.7,195.5 L1657.6,194.3 L1668.9,195.2 L1673.2,198.0 M1577.9,155.9 L1579.3,162.8 L1576.5,169.4 L1569.4,178.2 L1565.1,182.4 L1568.0,188.7 L1560.8,190.9 M1519.3,146.1 L1528.1,142.9 L1539.5,148.6 L1539.5,155.9 L1538.1,162.8 L1539.5,166.4 L1545.2,172.7 L1540.9,186.5 M1569.4,147.2 L1568.0,157.7 L1562.8,167.1 L1555.2,171.4 L1545.2,172.7 M1525.3,131.4 L1536.7,136.3 L1543.8,140.0 L1552.3,145.4 L1558.9,146.5 L1569.4,144.3 L1579.0,146.5 M1559.4,132.5 L1562.3,138.1 L1569.4,138.1 L1575.6,138.1 M1593.6,169.4 L1596.4,176.0 L1604.9,179.2 L1616.9,182.4 L1616.3,177.9 M1616.9,182.4 L1620.6,184.0 L1627.7,187.1 L1629.1,196.4 M1619.2,196.4 L1618.6,189.6 L1616.9,182.4 M1629.1,196.4 L1632.0,188.7 L1634.8,185.5 L1641.9,176.9 M1650.4,198.0 L1653.3,204.0 L1644.8,213.0 M1657.6,194.3 L1661.8,208.5 L1667.5,214.5 L1671.8,218.9 M1651.9,221.8 L1659.0,219.5 L1666.1,219.5 L1671.8,218.9 M1493.4,137.4 L1498.3,132.5 L1504.0,129.5 M1496.8,140.3 L1502.5,141.8" stroke="#f9d9ca" stroke-width="0.9" fill="none" opacity=".9"/></svg><div class="t" style="left:35.0px;top:92.50px;font-size:13px;color:#7f93bf;font-weight:700;letter-spacing:1px;transform:scaleX(1.165);transform-origin:0 0">NORTH</div><div class="t" style="left:32.5px;top:109.50px;font-size:13px;color:#7f93bf;font-weight:700;letter-spacing:1px;transform:scaleX(1.04);transform-origin:0 0">AMERICA</div><div class="t" style="left:1059.0px;top:92.50px;font-size:13px;color:#7f93bf;font-weight:700;letter-spacing:1px;transform:scaleX(1.165);transform-origin:0 0">NORTH</div><div class="t" style="left:1056.5px;top:109.50px;font-size:13px;color:#7f93bf;font-weight:700;letter-spacing:1px;transform:scaleX(1.04);transform-origin:0 0">AMERICA</div><div class="t" style="left:524.0px;top:125.00px;font-size:13px;color:#7f93bf;font-weight:700;letter-spacing:1px;transform:scaleX(1.12);transform-origin:0 0">ASIA</div><div class="t" style="left:203.5px;top:207.10px;font-size:15px;color:#8c9fc5;font-weight:700;letter-spacing:1.571px;">Atlantic</div></div><div class="a" style="left:828px;top:700px;width:32px;height:63px;background:#fff;border:2px solid rgba(0,0,0,.2);border-radius:4px;background-clip:padding-box"></div><div class="a" style="left:830px;top:731px;width:28px;height:1px;background:#ccc"></div><svg class="a" style="left:837px;top:710px;" width="14" height="14" viewBox="0 0 14 14"><path d="M7 1 V13 M1 7 H13" stroke="#000" stroke-width="2.6"/></svg><div class="a" style="left:837px;top:747px;width:14px;height:2.6px;background:#000"></div><div class="a" style="left:837px;top:759px;width:40px;height:40px;border-radius:50%;background:rgba(245,128,62,.2)"></div><div class="a" style="left:842px;top:764px;width:30px;height:30px;border-radius:50%;background:#f5803e;color:#fff;font-size:12px;line-height:30px;text-align:center">11</div><div class="a" style="left:928px;top:790px;width:40px;height:40px;border-radius:50%;background:rgba(245,128,62,.2)"></div><div class="a" style="left:933px;top:795px;width:30px;height:30px;border-radius:50%;background:#f5803e;color:#fff;font-size:12px;line-height:30px;text-align:center">26</div><div class="a" style="left:1137px;top:753px;width:40px;height:40px;border-radius:50%;background:rgba(0,210,122,.2)"></div><div class="a" style="left:1142px;top:758px;width:30px;height:30px;border-radius:50%;background:#00d27a;color:#fff;font-size:12px;line-height:30px;text-align:center">100</div><div class="a" style="left:1349px;top:792px;width:40px;height:40px;border-radius:50%;background:rgba(44,123,229,.2)"></div><div class="a" style="left:1354px;top:797px;width:30px;height:30px;border-radius:50%;background:#2c7be5;color:#fff;font-size:12px;line-height:30px;text-align:center">2</div><div class="a" style="left:1287px;top:880px;width:40px;height:40px;border-radius:50%;background:rgba(44,123,229,.2)"></div><div class="a" style="left:1292px;top:885px;width:30px;height:30px;border-radius:50%;background:#2c7be5;color:#fff;font-size:12px;line-height:30px;text-align:center">8</div></body></html>
